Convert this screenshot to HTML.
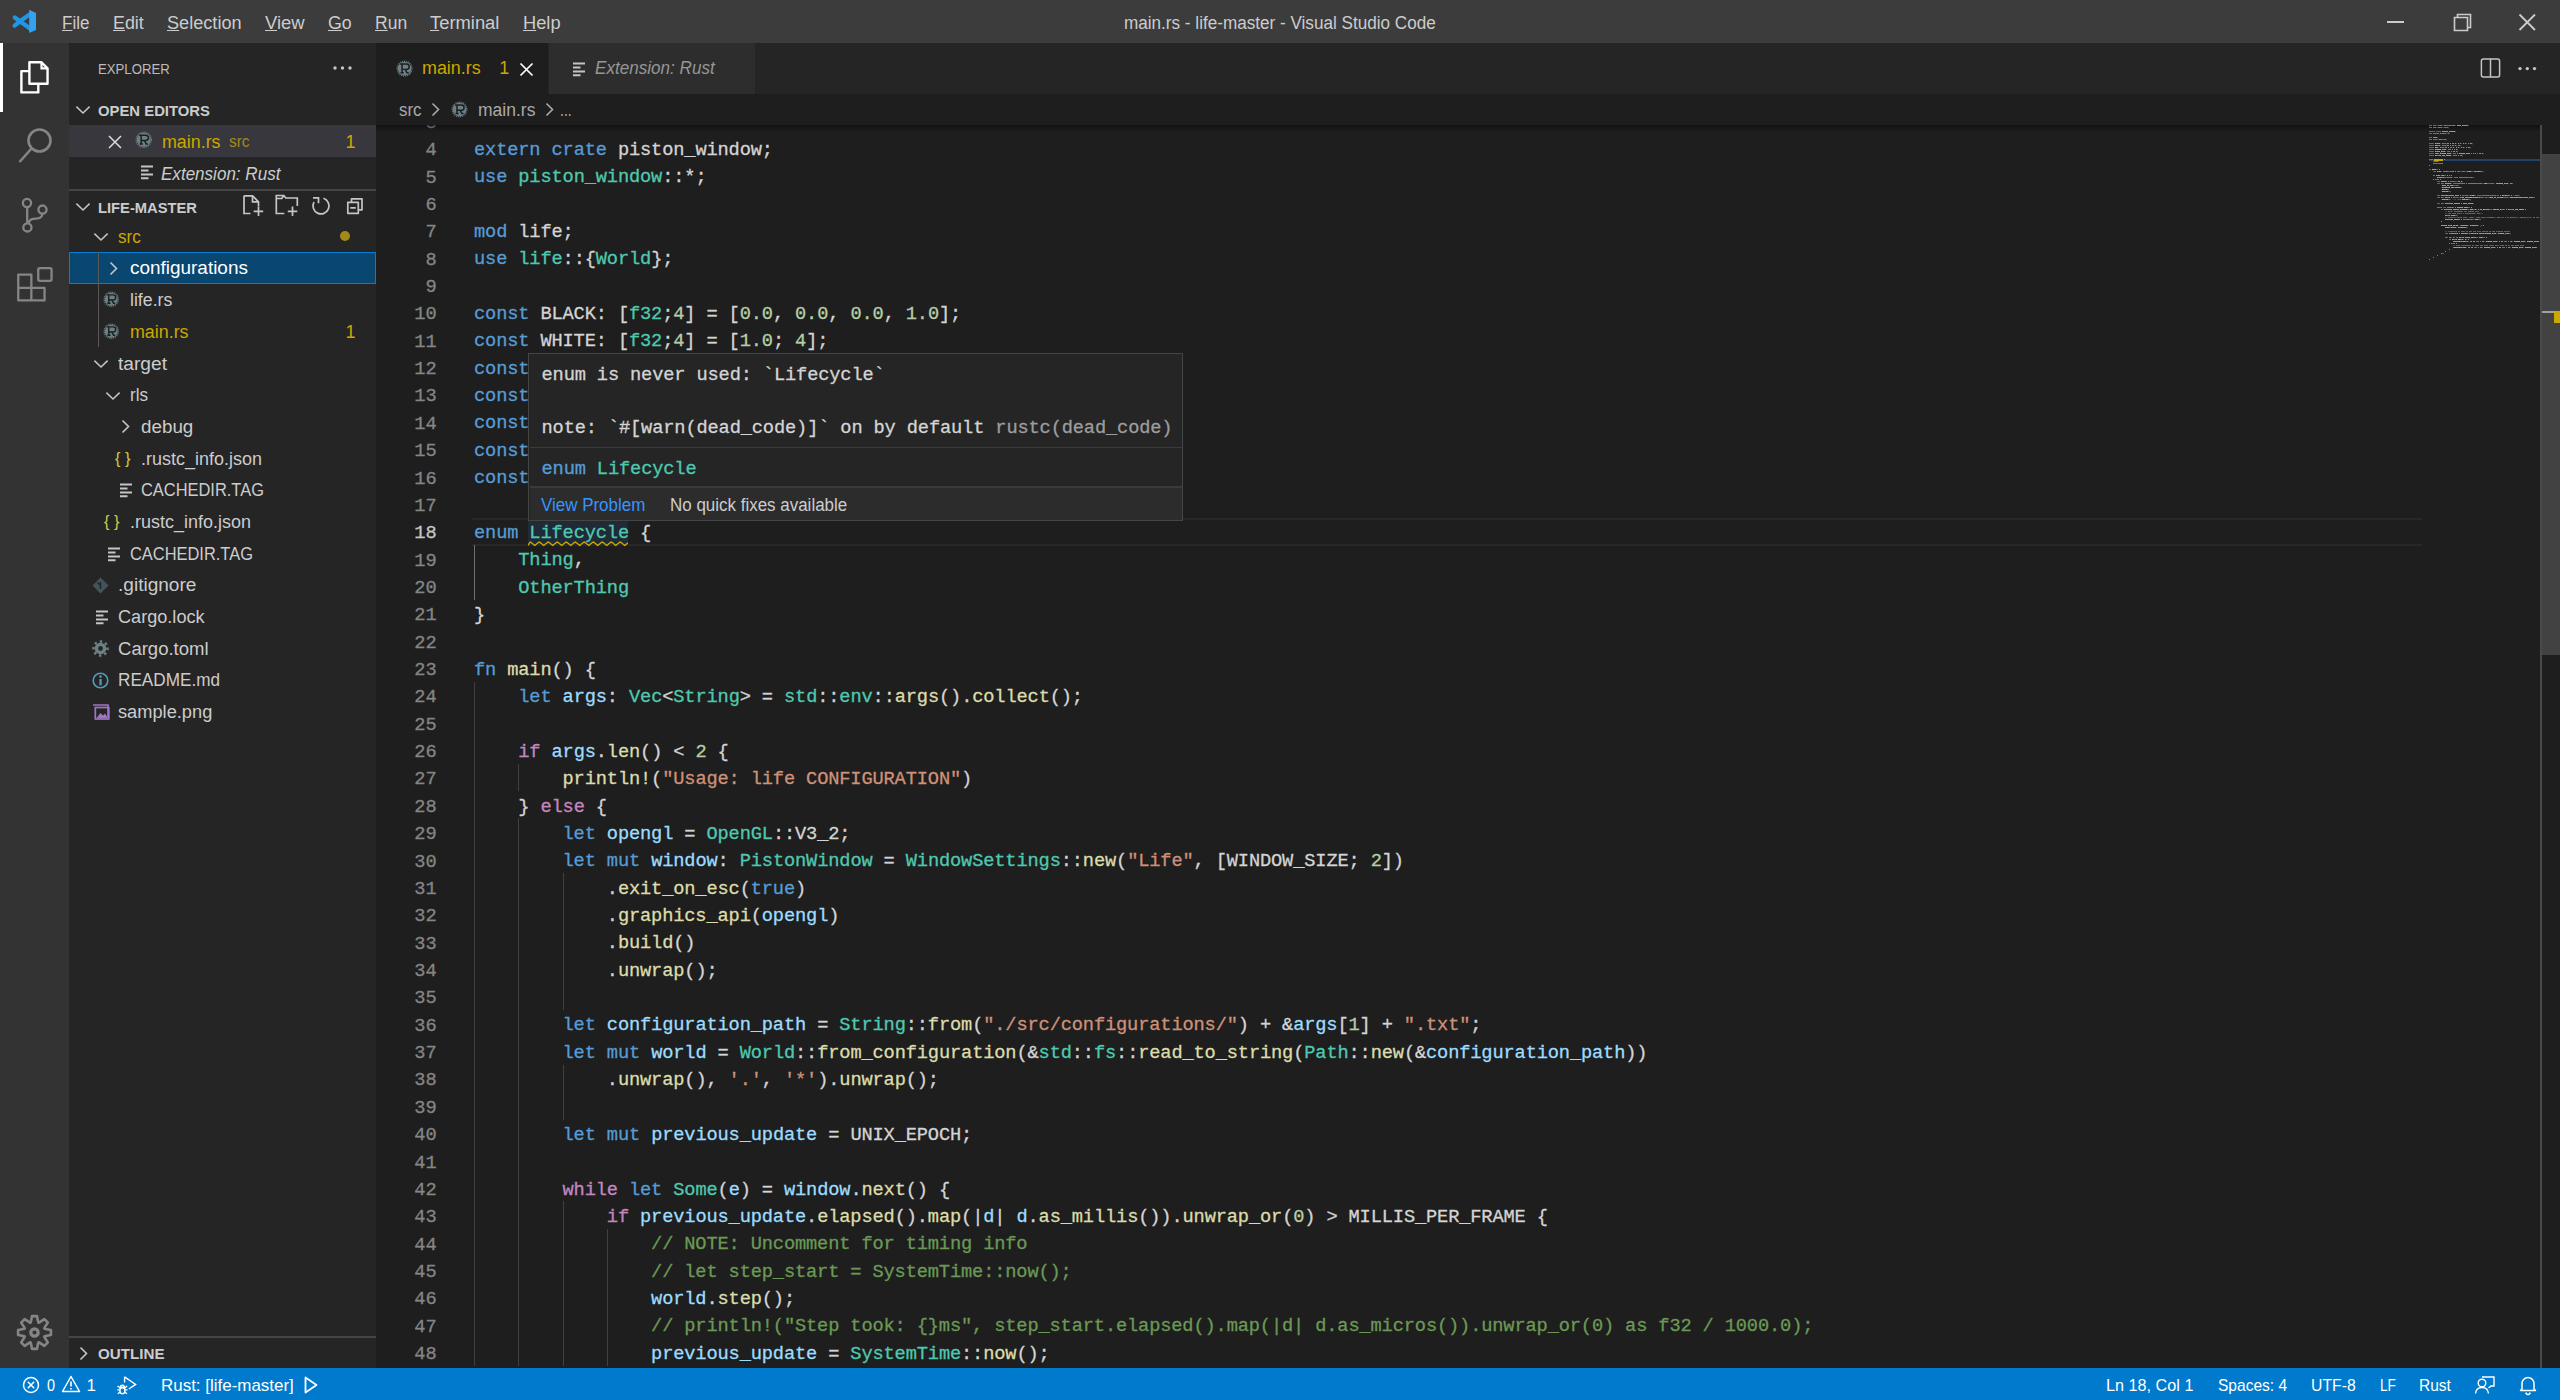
<!DOCTYPE html>
<html><head><meta charset="utf-8"><title>main.rs - life-master - Visual Studio Code</title>
<style>
html,body{margin:0;padding:0;}
body{width:2560px;height:1400px;overflow:hidden;position:relative;background:#1e1e1e;font-family:'Liberation Sans', sans-serif;}
.t{position:absolute;white-space:pre;}
.r{position:absolute;}
.s{position:absolute;overflow:visible;}
.code{position:absolute;white-space:pre;font-family:'Liberation Mono', monospace;}
</style></head><body>
<div class="r" style="left:0px;top:0px;width:2560px;height:43px;background:#3c3c3c;"></div><div class="r" style="left:0px;top:43px;width:69px;height:1325px;background:#333333;"></div><div class="r" style="left:69px;top:43px;width:307px;height:1325px;background:#252526;"></div><div class="r" style="left:376px;top:43px;width:2184px;height:51px;background:#252526;"></div><div class="r" style="left:376px;top:43px;width:172px;height:51px;background:#1e1e1e;"></div><div class="r" style="left:549px;top:43px;width:206px;height:51px;background:#2d2d2d;"></div><div class="r" style="left:0px;top:1368px;width:2560px;height:32px;background:#007acc;"></div><svg class="s" style="left:0px;top:0px;" width="45" height="43" viewBox="0 0 45 43"><path d="M14.8 17.4 L30 28.6 M14.6 25.6 L19.5 21.8 M30 14.2 L18.8 22" stroke="#2196e6" stroke-width="4.3" stroke-linecap="round"/><path d="M29.2 9.8 L36 12.9 V30 L29.2 33.1 Z" fill="#33a3ee"/></svg><div class="t" style="left:62.20px;top:14.06px;font-size:18px;line-height:18px;color:#cccccc;font-family:'Liberation Sans', sans-serif;transform:scaleX(0.9449);transform-origin:0 0;"><u style="text-decoration-thickness:1px;text-underline-offset:1px">F</u>ile</div><div class="t" style="left:113.00px;top:14.06px;font-size:18px;line-height:18px;color:#cccccc;font-family:'Liberation Sans', sans-serif;transform:scaleX(0.9931);transform-origin:0 0;"><u style="text-decoration-thickness:1px;text-underline-offset:1px">E</u>dit</div><div class="t" style="left:167.40px;top:14.06px;font-size:18px;line-height:18px;color:#cccccc;font-family:'Liberation Sans', sans-serif;transform:scaleX(1.0074);transform-origin:0 0;"><u style="text-decoration-thickness:1px;text-underline-offset:1px">S</u>election</div><div class="t" style="left:265.30px;top:14.06px;font-size:18px;line-height:18px;color:#cccccc;font-family:'Liberation Sans', sans-serif;transform:scaleX(1.0249);transform-origin:0 0;"><u style="text-decoration-thickness:1px;text-underline-offset:1px">V</u>iew</div><div class="t" style="left:327.90px;top:14.06px;font-size:18px;line-height:18px;color:#cccccc;font-family:'Liberation Sans', sans-serif;transform:scaleX(0.9870);transform-origin:0 0;"><u style="text-decoration-thickness:1px;text-underline-offset:1px">G</u>o</div><div class="t" style="left:375.00px;top:14.06px;font-size:18px;line-height:18px;color:#cccccc;font-family:'Liberation Sans', sans-serif;transform:scaleX(0.9724);transform-origin:0 0;"><u style="text-decoration-thickness:1px;text-underline-offset:1px">R</u>un</div><div class="t" style="left:429.90px;top:14.06px;font-size:18px;line-height:18px;color:#cccccc;font-family:'Liberation Sans', sans-serif;transform:scaleX(1.0203);transform-origin:0 0;"><u style="text-decoration-thickness:1px;text-underline-offset:1px">T</u>erminal</div><div class="t" style="left:523.30px;top:14.06px;font-size:18px;line-height:18px;color:#cccccc;font-family:'Liberation Sans', sans-serif;transform:scaleX(1.0155);transform-origin:0 0;"><u style="text-decoration-thickness:1px;text-underline-offset:1px">H</u>elp</div><div class="t" style="left:1124.30px;top:13.76px;font-size:18px;line-height:18px;color:#cccccc;font-family:'Liberation Sans', sans-serif;transform:scaleX(0.9509);transform-origin:0 0;">main.rs - life-master - Visual Studio Code</div><svg class="s" style="left:2380px;top:10px;" width="180" height="26" viewBox="0 0 180 26"><rect x="7" y="11" width="17" height="2" fill="#cccccc"/>
<path d="M74.5 7.5 h13 v13 h-13 z M77.5 7.5 v-3 h13 v13 h-3" fill="none" stroke="#cccccc" stroke-width="1.6"/>
<path d="M139.5 4.5 L155 20 M155 4.5 L139.5 20" stroke="#cccccc" stroke-width="1.8"/></svg><div class="r" style="left:0px;top:43px;width:3px;height:69px;background:#ffffff;"></div><svg class="s" style="left:16px;top:58px;" width="36" height="40" viewBox="0 0 36 40"><path d="M13.4 4.3 H25.5 L31.55 10.3 V25.8 H13.4 Z" fill="none" stroke="#fff" stroke-width="2.4" stroke-linejoin="round"/>
<path d="M25.5 4.3 V10.3 H31.55" fill="none" stroke="#fff" stroke-width="2.2"/>
<path d="M13.4 13.1 H5.4 V34.4 H22.3 V25.8" fill="none" stroke="#fff" stroke-width="2.4" stroke-linejoin="round"/></svg><svg class="s" style="left:16px;top:126px;" width="40" height="40" viewBox="0 0 40 40"><circle cx="23.5" cy="14.5" r="11" fill="none" stroke="#858585" stroke-width="2.6"/>
<path d="M15.5 22.5 L3.5 36" stroke="#858585" stroke-width="2.6"/></svg><svg class="s" style="left:16px;top:196px;" width="40" height="40" viewBox="0 0 40 40"><circle cx="11" cy="7" r="4.1" fill="none" stroke="#858585" stroke-width="2.3"/>
<circle cx="11.4" cy="31.4" r="4.1" fill="none" stroke="#858585" stroke-width="2.3"/>
<circle cx="26.5" cy="13.6" r="4.1" fill="none" stroke="#858585" stroke-width="2.3"/>
<path d="M11.2 11.1 V27.3 M12.4 27.4 C13.8 23.4 15.5 22.7 20 22.6 C24.2 22.5 26.2 21 26.4 17.7" fill="none" stroke="#858585" stroke-width="2.3"/></svg><svg class="s" style="left:14px;top:264px;" width="42" height="42" viewBox="0 0 42 42"><path d="M4.25 10.55 H17.35 V23.9 H30.55 V36.45 H4.25 Z M4.25 23.9 H17.35 V36.45" fill="none" stroke="#858585" stroke-width="2.3" stroke-linejoin="round"/>
<rect x="24.25" y="4.15" width="13.3" height="12.8" rx="1.6" fill="none" stroke="#858585" stroke-width="2.3"/></svg><svg class="s" style="left:17px;top:1315px;" width="36" height="36" viewBox="0 0 36 36"><path d="M13.96 6.45 L15.02 1.09 L19.98 1.09 L21.04 6.45 L21.56 7.71 L22.81 7.19 L27.35 4.14 L30.86 7.65 L27.81 12.19 L27.29 13.44 L28.55 13.96 L33.91 15.02 L33.91 19.98 L28.55 21.04 L27.29 21.56 L27.81 22.81 L30.86 27.35 L27.35 30.86 L22.81 27.81 L21.56 27.29 L21.04 28.55 L19.98 33.91 L15.02 33.91 L13.96 28.55 L13.44 27.29 L12.19 27.81 L7.65 30.86 L4.14 27.35 L7.19 22.81 L7.71 21.56 L6.45 21.04 L1.09 19.98 L1.09 15.02 L6.45 13.96 L7.71 13.44 L7.19 12.19 L4.14 7.65 L7.65 4.14 L12.19 7.19 L13.44 7.71Z" fill="none" stroke="#858585" stroke-width="2.6" stroke-linejoin="round"/><circle cx="17.5" cy="17.5" r="3.7" fill="none" stroke="#858585" stroke-width="3.2"/></svg><div class="t" style="left:98.25px;top:61.26px;font-size:15.4px;line-height:15.4px;color:#bbbbbb;font-family:'Liberation Sans', sans-serif;transform:scaleX(0.8555);transform-origin:0 0;">EXPLORER</div><svg class="s" style="left:332px;top:64px;" width="24" height="8" viewBox="0 0 24 8"><circle cx="3" cy="4" r="1.7" fill="#c5c5c5"/><circle cx="10.5" cy="4" r="1.7" fill="#c5c5c5"/><circle cx="18" cy="4" r="1.7" fill="#c5c5c5"/></svg><svg class="s" style="left:75px;top:103.8px;" width="16" height="12" viewBox="0 0 16 12"><path d="M1.4 2.6 L8 9 L14.6 2.6" fill="none" stroke="#c5c5c5" stroke-width="1.5"/></svg><div class="t" style="left:98.00px;top:103.10px;font-size:15px;line-height:15px;color:#cccccc;font-family:'Liberation Sans', sans-serif;font-weight:bold;transform:scaleX(0.9904);transform-origin:0 0;">OPEN EDITORS</div><div class="r" style="left:69px;top:125px;width:307px;height:32px;background:#37373d;"></div><svg class="s" style="left:107px;top:134px;" width="16" height="16" viewBox="0 0 16 16"><path d="M2 2 L14 14 M14 2 L2 14" stroke="#dcdcdc" stroke-width="1.5"/></svg><svg class="s" style="left:134.8px;top:131.3px;" width="17.5" height="17.5" viewBox="0 0 17.5 17.5"><circle cx="8.75" cy="8.75" r="6.95" fill="#6d8086"/><circle cx="8.75" cy="8.75" r="7.550000000000001" fill="none" stroke="#6d8086" stroke-width="1.3" stroke-dasharray="1.1 0.9"/><path d="M4.15 4.15 h6.2 a3 2.6 0 0 1 0 5.4 h-5 M6.15 4.15 v8.6 M4.55 12.95 h3.4 M9.55 9.65 l1.6 3.3 h1.8" fill="none" stroke="#1e1e1e" stroke-width="1.5" transform="scale(1.0) translate(0.00,0.00)"/></svg><div class="t" style="left:161.70px;top:132.66px;font-size:18px;line-height:18px;color:#cca700;font-family:'Liberation Sans', sans-serif;transform:scaleX(0.9915);transform-origin:0 0;">main.rs</div><div class="t" style="left:229.10px;top:134.36px;font-size:16px;line-height:16px;color:#a38a14;font-family:'Liberation Sans', sans-serif;transform:scaleX(0.9659);transform-origin:0 0;">src</div><div class="t" style="left:345.50px;top:132.66px;font-size:18px;line-height:18px;color:#cca700;font-family:'Liberation Sans', sans-serif;">1</div><svg class="s" style="left:140.5px;top:165px;" width="14" height="14" viewBox="0 0 14 14"><path d="M0 1.5 h12 M0 5.5 h7.5 M0 9.5 h12 M0 13.2 h7.5" stroke="#c5c5c5" stroke-width="1.9"/></svg><div class="t" style="left:161.25px;top:164.56px;font-size:18px;line-height:18px;color:#cccccc;font-family:'Liberation Sans', sans-serif;font-style:italic;transform:scaleX(0.9471);transform-origin:0 0;">Extension: Rust</div><div class="r" style="left:69px;top:189px;width:307px;height:1.5px;background:#454545;"></div><svg class="s" style="left:75px;top:200.8px;" width="16" height="12" viewBox="0 0 16 12"><path d="M1.4 2.6 L8 9 L14.6 2.6" fill="none" stroke="#c5c5c5" stroke-width="1.5"/></svg><div class="t" style="left:98.00px;top:199.50px;font-size:15px;line-height:15px;color:#cccccc;font-family:'Liberation Sans', sans-serif;font-weight:bold;transform:scaleX(0.9819);transform-origin:0 0;">LIFE-MASTER</div><svg class="s" style="left:240px;top:193px;" width="140" height="26" viewBox="0 0 140 26"><path d="M4 2.8 h8.5 l6 6 v4.5 M10.5 20.5 h-6.5 v-17.7" fill="none" stroke="#c5c5c5" stroke-width="1.7"/>
<path d="M12.5 2.8 v6 h6" fill="none" stroke="#c5c5c5" stroke-width="1.7"/>
<path d="M18.5 13.5 v9.5 M13.7 18.3 h9.5" stroke="#c5c5c5" stroke-width="1.7"/>
<g transform="translate(-10.5,0)"><path d="M46.8 13 v-10.5 h7.5 l2 2.5 h11.5 v8 M46.8 13 v7.5 h8 M54.3 2.5 l-2 3 h-5.5" fill="none" stroke="#c5c5c5" stroke-width="1.7"/>
<path d="M63 13.5 v9.5 M58.3 18.3 h9.5" stroke="#c5c5c5" stroke-width="1.7"/></g>
<g transform="translate(-4.5,0)"><path d="M78.5 9 A8 8 0 1 0 88 5.3" fill="none" stroke="#c5c5c5" stroke-width="1.7"/>
<path d="M77.5 4.8 h5.5 v5.5" fill="none" stroke="#c5c5c5" stroke-width="1.7"/></g>
<g transform="translate(-3.5,0)"><path d="M111.3 9.3 h10.5 v11 h-10.5 z M115 9.3 v-3.5 h10.5 v11 h-3.7 M113.8 14.8 h5.5" fill="none" stroke="#c5c5c5" stroke-width="1.7" stroke-linejoin="round"/></g></svg><div class="r" style="left:69px;top:252px;width:307px;height:32px;background:#094771;box-sizing:border-box;border:1px solid #007fd4;"></div><div class="r" style="left:98px;top:252px;width:1px;height:95px;background:#585858;"></div><svg class="s" style="left:93.0px;top:231.12px;" width="16" height="12" viewBox="0 0 16 12"><path d="M1.4 2.6 L8 9 L14.6 2.6" fill="none" stroke="#c5c5c5" stroke-width="1.5"/></svg><div class="t" style="left:118.00px;top:227.78px;font-size:18px;line-height:18px;color:#cca700;font-family:'Liberation Sans', sans-serif;transform:scaleX(0.9502);transform-origin:0 0;">src</div><svg class="s" style="left:108.02px;top:260.5px;" width="12" height="16" viewBox="0 0 12 16"><path d="M2.5 1.5 L8.5 7.5 L2.5 13.5" fill="none" stroke="#c5c5c5" stroke-width="1.6"/></svg><div class="t" style="left:129.52px;top:259.46px;font-size:18px;line-height:18px;color:#ffffff;font-family:'Liberation Sans', sans-serif;transform:scaleX(1.0520);transform-origin:0 0;">configurations</div><svg class="s" style="left:103.3px;top:291.18px;" width="16.5" height="16.5" viewBox="0 0 16.5 16.5"><circle cx="8.25" cy="8.25" r="6.45" fill="#6d8086"/><circle cx="8.25" cy="8.25" r="7.050000000000001" fill="none" stroke="#6d8086" stroke-width="1.3" stroke-dasharray="1.1 0.9"/><path d="M3.6500000000000004 3.6500000000000004 h6.2 a3 2.6 0 0 1 0 5.4 h-5 M5.65 3.6500000000000004 v8.6 M4.05 12.45 h3.4 M9.05 9.15 l1.6 3.3 h1.8" fill="none" stroke="#1e1e1e" stroke-width="1.5" transform="scale(0.9428571428571428) translate(0.50,0.50)"/></svg><div class="t" style="left:129.52px;top:291.14px;font-size:18px;line-height:18px;color:#cccccc;font-family:'Liberation Sans', sans-serif;transform:scaleX(0.9837);transform-origin:0 0;">life.rs</div><svg class="s" style="left:103.3px;top:322.86px;" width="16.5" height="16.5" viewBox="0 0 16.5 16.5"><circle cx="8.25" cy="8.25" r="6.45" fill="#6d8086"/><circle cx="8.25" cy="8.25" r="7.050000000000001" fill="none" stroke="#6d8086" stroke-width="1.3" stroke-dasharray="1.1 0.9"/><path d="M3.6500000000000004 3.6500000000000004 h6.2 a3 2.6 0 0 1 0 5.4 h-5 M5.65 3.6500000000000004 v8.6 M4.05 12.45 h3.4 M9.05 9.15 l1.6 3.3 h1.8" fill="none" stroke="#1e1e1e" stroke-width="1.5" transform="scale(0.9428571428571428) translate(0.50,0.50)"/></svg><div class="t" style="left:129.52px;top:322.82px;font-size:18px;line-height:18px;color:#cca700;font-family:'Liberation Sans', sans-serif;transform:scaleX(0.9915);transform-origin:0 0;">main.rs</div><svg class="s" style="left:93.0px;top:357.84px;" width="16" height="12" viewBox="0 0 16 12"><path d="M1.4 2.6 L8 9 L14.6 2.6" fill="none" stroke="#c5c5c5" stroke-width="1.5"/></svg><div class="t" style="left:118.00px;top:354.50px;font-size:18px;line-height:18px;color:#cccccc;font-family:'Liberation Sans', sans-serif;transform:scaleX(1.0646);transform-origin:0 0;">target</div><svg class="s" style="left:104.52px;top:389.52000000000004px;" width="16" height="12" viewBox="0 0 16 12"><path d="M1.4 2.6 L8 9 L14.6 2.6" fill="none" stroke="#c5c5c5" stroke-width="1.5"/></svg><div class="t" style="left:129.52px;top:386.18px;font-size:18px;line-height:18px;color:#cccccc;font-family:'Liberation Sans', sans-serif;transform:scaleX(0.9479);transform-origin:0 0;">rls</div><svg class="s" style="left:119.53999999999999px;top:418.9px;" width="12" height="16" viewBox="0 0 12 16"><path d="M2.5 1.5 L8.5 7.5 L2.5 13.5" fill="none" stroke="#c5c5c5" stroke-width="1.6"/></svg><div class="t" style="left:141.04px;top:417.86px;font-size:18px;line-height:18px;color:#cccccc;font-family:'Liberation Sans', sans-serif;transform:scaleX(1.0448);transform-origin:0 0;">debug</div><div class="t" style="left:115.02px;top:449.89px;font-size:17px;line-height:17px;color:#cbcb41;font-family:'Liberation Sans', sans-serif;transform:scaleX(0.9638);transform-origin:0 0;">{ }</div><div class="t" style="left:141.04px;top:449.54px;font-size:18px;line-height:18px;color:#cccccc;font-family:'Liberation Sans', sans-serif;transform:scaleX(0.9986);transform-origin:0 0;">.rustc_info.json</div><svg class="s" style="left:119.52px;top:483.26px;" width="14" height="14" viewBox="0 0 14 14"><path d="M0 1.5 h12 M0 5.5 h7.5 M0 9.5 h12 M0 13.2 h7.5" stroke="#c5c5c5" stroke-width="1.9"/></svg><div class="t" style="left:141.04px;top:481.22px;font-size:18px;line-height:18px;color:#cccccc;font-family:'Liberation Sans', sans-serif;transform:scaleX(0.9126);transform-origin:0 0;">CACHEDIR.TAG</div><div class="t" style="left:103.50px;top:513.25px;font-size:17px;line-height:17px;color:#cbcb41;font-family:'Liberation Sans', sans-serif;transform:scaleX(0.9638);transform-origin:0 0;">{ }</div><div class="t" style="left:129.52px;top:512.90px;font-size:18px;line-height:18px;color:#cccccc;font-family:'Liberation Sans', sans-serif;transform:scaleX(0.9986);transform-origin:0 0;">.rustc_info.json</div><svg class="s" style="left:108.0px;top:546.62px;" width="14" height="14" viewBox="0 0 14 14"><path d="M0 1.5 h12 M0 5.5 h7.5 M0 9.5 h12 M0 13.2 h7.5" stroke="#c5c5c5" stroke-width="1.9"/></svg><div class="t" style="left:129.52px;top:544.58px;font-size:18px;line-height:18px;color:#cccccc;font-family:'Liberation Sans', sans-serif;transform:scaleX(0.9126);transform-origin:0 0;">CACHEDIR.TAG</div><svg class="s" style="left:92px;top:576.8px;" width="17" height="17" viewBox="0 0 17 17"><path d="M8.5 0.5 L16.5 8.5 L8.5 16.5 L0.5 8.5 Z" fill="#41535b"/><path d="M5.5 5.5 L8.5 8.5 M8.5 5 V12" stroke="#252526" stroke-width="1.4"/></svg><div class="t" style="left:118.00px;top:576.26px;font-size:18px;line-height:18px;color:#cccccc;font-family:'Liberation Sans', sans-serif;transform:scaleX(1.0587);transform-origin:0 0;">.gitignore</div><svg class="s" style="left:96.48px;top:609.98px;" width="14" height="14" viewBox="0 0 14 14"><path d="M0 1.5 h12 M0 5.5 h7.5 M0 9.5 h12 M0 13.2 h7.5" stroke="#c5c5c5" stroke-width="1.9"/></svg><div class="t" style="left:118.00px;top:607.94px;font-size:18px;line-height:18px;color:#cccccc;font-family:'Liberation Sans', sans-serif;transform:scaleX(1.0061);transform-origin:0 0;">Cargo.lock</div><svg class="s" style="left:92px;top:639.66px;" width="17" height="17" viewBox="0 0 17 17"><circle cx="8.5" cy="8.5" r="7" fill="none" stroke="#6d8086" stroke-width="2.6" stroke-dasharray="2.4 3.1" transform="rotate(-8 8.5 8.5)"/><circle cx="8.5" cy="8.5" r="4.1" fill="none" stroke="#6d8086" stroke-width="3.4"/></svg><div class="t" style="left:118.00px;top:639.62px;font-size:18px;line-height:18px;color:#cccccc;font-family:'Liberation Sans', sans-serif;transform:scaleX(1.0291);transform-origin:0 0;">Cargo.toml</div><svg class="s" style="left:92px;top:671.8399999999999px;" width="17" height="17" viewBox="0 0 17 17"><circle cx="8.5" cy="8.5" r="7.3" fill="none" stroke="#519aba" stroke-width="1.6"/><rect x="7.4" y="7" width="2.3" height="6.3" fill="#519aba"/><circle cx="8.5" cy="4.6" r="1.3" fill="#519aba"/></svg><div class="t" style="left:118.00px;top:671.30px;font-size:18px;line-height:18px;color:#cccccc;font-family:'Liberation Sans', sans-serif;transform:scaleX(0.9532);transform-origin:0 0;">README.md</div><svg class="s" style="left:92px;top:703.52px;" width="18" height="16" viewBox="0 0 18 16"><path d="M1 1 h15 v12" fill="none" stroke="#a074c4" stroke-width="1.6"/><rect x="3.3" y="3.5" width="13.5" height="11.5" fill="none" stroke="#a074c4" stroke-width="1.7"/><path d="M4.5 14 L8.5 9 L11 11.5 L13 9.5 L16 14 Z" fill="#a074c4"/></svg><div class="t" style="left:118.00px;top:702.98px;font-size:18px;line-height:18px;color:#cccccc;font-family:'Liberation Sans', sans-serif;transform:scaleX(1.0133);transform-origin:0 0;">sample.png</div><svg class="s" style="left:339px;top:230px;" width="12" height="12" viewBox="0 0 12 12"><circle cx="6" cy="6" r="5" fill="#a38a14"/></svg><div class="t" style="left:345.50px;top:322.82px;font-size:18px;line-height:18px;color:#cca700;font-family:'Liberation Sans', sans-serif;">1</div><div class="r" style="left:69px;top:1336px;width:307px;height:1.5px;background:#454545;"></div><svg class="s" style="left:78px;top:1345.5px;" width="12" height="16" viewBox="0 0 12 16"><path d="M2.5 1.5 L8.5 7.5 L2.5 13.5" fill="none" stroke="#c5c5c5" stroke-width="1.6"/></svg><div class="t" style="left:98.00px;top:1346.10px;font-size:15px;line-height:15px;color:#cccccc;font-family:'Liberation Sans', sans-serif;font-weight:bold;transform:scaleX(1.0101);transform-origin:0 0;">OUTLINE</div><svg class="s" style="left:395.8px;top:59.5px;" width="17.2" height="17.2" viewBox="0 0 17.2 17.2"><circle cx="8.6" cy="8.6" r="6.8" fill="#6d8086"/><circle cx="8.6" cy="8.6" r="7.4" fill="none" stroke="#6d8086" stroke-width="1.3" stroke-dasharray="1.1 0.9"/><path d="M4.0 4.0 h6.2 a3 2.6 0 0 1 0 5.4 h-5 M6.0 4.0 v8.6 M4.3999999999999995 12.8 h3.4 M9.4 9.5 l1.6 3.3 h1.8" fill="none" stroke="#1e1e1e" stroke-width="1.5" transform="scale(0.9828571428571428) translate(0.15,0.15)"/></svg><div class="t" style="left:422.30px;top:59.16px;font-size:18px;line-height:18px;color:#cca700;font-family:'Liberation Sans', sans-serif;transform:scaleX(0.9948);transform-origin:0 0;">main.rs</div><div class="t" style="left:499.20px;top:59.16px;font-size:18px;line-height:18px;color:#cca700;font-family:'Liberation Sans', sans-serif;">1</div><svg class="s" style="left:519px;top:61.5px;" width="16" height="16" viewBox="0 0 16 16"><path d="M1.5 1.5 L13.5 13.5 M13.5 1.5 L1.5 13.5" stroke="#ffffff" stroke-width="1.7"/></svg><svg class="s" style="left:573px;top:62px;" width="14" height="14" viewBox="0 0 14 14"><path d="M0 1.5 h12 M0 5.5 h7.5 M0 9.5 h12 M0 13.2 h7.5" stroke="#c5c5c5" stroke-width="1.9"/></svg><div class="t" style="left:595.00px;top:59.16px;font-size:18px;line-height:18px;color:#969696;font-family:'Liberation Sans', sans-serif;font-style:italic;transform:scaleX(0.9495);transform-origin:0 0;">Extension: Rust</div><svg class="s" style="left:2478px;top:56px;" width="60" height="24" viewBox="0 0 60 24"><rect x="3.4" y="2.9" width="18.2" height="18" rx="2" fill="none" stroke="#c5c5c5" stroke-width="1.5"/><path d="M12.5 2.9 v18" stroke="#c5c5c5" stroke-width="1.5"/><circle cx="42" cy="12.6" r="1.7" fill="#c5c5c5"/><circle cx="49.3" cy="12.6" r="1.7" fill="#c5c5c5"/><circle cx="56.5" cy="12.6" r="1.7" fill="#c5c5c5"/></svg><div class="t" style="left:399.00px;top:101.16px;font-size:18px;line-height:18px;color:#a9a9a9;font-family:'Liberation Sans', sans-serif;transform:scaleX(0.9377);transform-origin:0 0;">src</div><svg class="s" style="left:429.5px;top:101.5px;" width="12" height="16" viewBox="0 0 12 16"><path d="M2.5 1.5 L8.5 7.5 L2.5 13.5" fill="none" stroke="#a9a9a9" stroke-width="1.6"/></svg><svg class="s" style="left:450.5px;top:101px;" width="17" height="17" viewBox="0 0 17 17"><circle cx="8.5" cy="8.5" r="6.7" fill="#6d8086"/><circle cx="8.5" cy="8.5" r="7.300000000000001" fill="none" stroke="#6d8086" stroke-width="1.3" stroke-dasharray="1.1 0.9"/><path d="M3.9000000000000004 3.9000000000000004 h6.2 a3 2.6 0 0 1 0 5.4 h-5 M5.9 3.9000000000000004 v8.6 M4.3 12.7 h3.4 M9.3 9.4 l1.6 3.3 h1.8" fill="none" stroke="#1e1e1e" stroke-width="1.5" transform="scale(0.9714285714285714) translate(0.25,0.25)"/></svg><div class="t" style="left:477.60px;top:101.16px;font-size:18px;line-height:18px;color:#a9a9a9;font-family:'Liberation Sans', sans-serif;transform:scaleX(0.9728);transform-origin:0 0;">main.rs</div><svg class="s" style="left:543.5px;top:101.5px;" width="12" height="16" viewBox="0 0 12 16"><path d="M2.5 1.5 L8.5 7.5 L2.5 13.5" fill="none" stroke="#a9a9a9" stroke-width="1.6"/></svg><div class="t" style="left:560.00px;top:101.16px;font-size:18px;line-height:18px;color:#a9a9a9;font-family:'Liberation Sans', sans-serif;transform:scaleX(0.7803);transform-origin:0 0;">...</div><div style="position:absolute;left:0;top:0;width:2560px;height:1400px;clip-path:inset(125.28px 20px 32px 376px)"><div class="r" style="left:472px;top:518.2px;width:1950px;height:27.6px;background:transparent;box-sizing:border-box;border-top:2px solid #282828;border-bottom:2px solid #282828;"></div><div class="r" style="left:474px;top:544.72px;width:1px;height:27.86px;background:#707070;"></div><div class="r" style="left:474px;top:572.0799999999999px;width:1px;height:27.86px;background:#707070;"></div><div class="r" style="left:474px;top:681.52px;width:1px;height:27.86px;background:#404040;"></div><div class="r" style="left:474px;top:708.8799999999999px;width:1px;height:27.86px;background:#404040;"></div><div class="r" style="left:474px;top:736.24px;width:1px;height:27.86px;background:#404040;"></div><div class="r" style="left:474px;top:763.5999999999999px;width:1px;height:27.86px;background:#404040;"></div><div class="r" style="left:518px;top:763.5999999999999px;width:1px;height:27.86px;background:#404040;"></div><div class="r" style="left:474px;top:790.96px;width:1px;height:27.86px;background:#404040;"></div><div class="r" style="left:474px;top:818.3199999999999px;width:1px;height:27.86px;background:#404040;"></div><div class="r" style="left:518px;top:818.3199999999999px;width:1px;height:27.86px;background:#404040;"></div><div class="r" style="left:474px;top:845.6800000000001px;width:1px;height:27.86px;background:#404040;"></div><div class="r" style="left:518px;top:845.6800000000001px;width:1px;height:27.86px;background:#404040;"></div><div class="r" style="left:474px;top:873.04px;width:1px;height:27.86px;background:#404040;"></div><div class="r" style="left:563px;top:873.04px;width:1px;height:27.86px;background:#404040;"></div><div class="r" style="left:518px;top:873.04px;width:1px;height:27.86px;background:#404040;"></div><div class="r" style="left:474px;top:900.3999999999999px;width:1px;height:27.86px;background:#404040;"></div><div class="r" style="left:563px;top:900.3999999999999px;width:1px;height:27.86px;background:#404040;"></div><div class="r" style="left:518px;top:900.3999999999999px;width:1px;height:27.86px;background:#404040;"></div><div class="r" style="left:474px;top:927.76px;width:1px;height:27.86px;background:#404040;"></div><div class="r" style="left:563px;top:927.76px;width:1px;height:27.86px;background:#404040;"></div><div class="r" style="left:518px;top:927.76px;width:1px;height:27.86px;background:#404040;"></div><div class="r" style="left:474px;top:955.1199999999999px;width:1px;height:27.86px;background:#404040;"></div><div class="r" style="left:563px;top:955.1199999999999px;width:1px;height:27.86px;background:#404040;"></div><div class="r" style="left:518px;top:955.1199999999999px;width:1px;height:27.86px;background:#404040;"></div><div class="r" style="left:474px;top:982.48px;width:1px;height:27.86px;background:#404040;"></div><div class="r" style="left:563px;top:982.48px;width:1px;height:27.86px;background:#404040;"></div><div class="r" style="left:518px;top:982.48px;width:1px;height:27.86px;background:#404040;"></div><div class="r" style="left:474px;top:1009.8399999999999px;width:1px;height:27.86px;background:#404040;"></div><div class="r" style="left:518px;top:1009.8399999999999px;width:1px;height:27.86px;background:#404040;"></div><div class="r" style="left:474px;top:1037.2px;width:1px;height:27.86px;background:#404040;"></div><div class="r" style="left:518px;top:1037.2px;width:1px;height:27.86px;background:#404040;"></div><div class="r" style="left:474px;top:1064.56px;width:1px;height:27.86px;background:#404040;"></div><div class="r" style="left:563px;top:1064.56px;width:1px;height:27.86px;background:#404040;"></div><div class="r" style="left:518px;top:1064.56px;width:1px;height:27.86px;background:#404040;"></div><div class="r" style="left:474px;top:1091.92px;width:1px;height:27.86px;background:#404040;"></div><div class="r" style="left:563px;top:1091.92px;width:1px;height:27.86px;background:#404040;"></div><div class="r" style="left:518px;top:1091.92px;width:1px;height:27.86px;background:#404040;"></div><div class="r" style="left:474px;top:1119.28px;width:1px;height:27.86px;background:#404040;"></div><div class="r" style="left:518px;top:1119.28px;width:1px;height:27.86px;background:#404040;"></div><div class="r" style="left:474px;top:1146.6399999999999px;width:1px;height:27.86px;background:#404040;"></div><div class="r" style="left:518px;top:1146.6399999999999px;width:1px;height:27.86px;background:#404040;"></div><div class="r" style="left:474px;top:1174.0px;width:1px;height:27.86px;background:#404040;"></div><div class="r" style="left:518px;top:1174.0px;width:1px;height:27.86px;background:#404040;"></div><div class="r" style="left:474px;top:1201.36px;width:1px;height:27.86px;background:#404040;"></div><div class="r" style="left:563px;top:1201.36px;width:1px;height:27.86px;background:#404040;"></div><div class="r" style="left:518px;top:1201.36px;width:1px;height:27.86px;background:#404040;"></div><div class="r" style="left:474px;top:1228.72px;width:1px;height:27.86px;background:#404040;"></div><div class="r" style="left:563px;top:1228.72px;width:1px;height:27.86px;background:#404040;"></div><div class="r" style="left:518px;top:1228.72px;width:1px;height:27.86px;background:#404040;"></div><div class="r" style="left:607px;top:1228.72px;width:1px;height:27.86px;background:#404040;"></div><div class="r" style="left:474px;top:1256.08px;width:1px;height:27.86px;background:#404040;"></div><div class="r" style="left:563px;top:1256.08px;width:1px;height:27.86px;background:#404040;"></div><div class="r" style="left:518px;top:1256.08px;width:1px;height:27.86px;background:#404040;"></div><div class="r" style="left:607px;top:1256.08px;width:1px;height:27.86px;background:#404040;"></div><div class="r" style="left:474px;top:1283.4399999999998px;width:1px;height:27.86px;background:#404040;"></div><div class="r" style="left:563px;top:1283.4399999999998px;width:1px;height:27.86px;background:#404040;"></div><div class="r" style="left:518px;top:1283.4399999999998px;width:1px;height:27.86px;background:#404040;"></div><div class="r" style="left:607px;top:1283.4399999999998px;width:1px;height:27.86px;background:#404040;"></div><div class="r" style="left:474px;top:1310.8px;width:1px;height:27.86px;background:#404040;"></div><div class="r" style="left:563px;top:1310.8px;width:1px;height:27.86px;background:#404040;"></div><div class="r" style="left:518px;top:1310.8px;width:1px;height:27.86px;background:#404040;"></div><div class="r" style="left:607px;top:1310.8px;width:1px;height:27.86px;background:#404040;"></div><div class="r" style="left:474px;top:1338.1599999999999px;width:1px;height:27.86px;background:#404040;"></div><div class="r" style="left:563px;top:1338.1599999999999px;width:1px;height:27.86px;background:#404040;"></div><div class="r" style="left:518px;top:1338.1599999999999px;width:1px;height:27.86px;background:#404040;"></div><div class="r" style="left:607px;top:1338.1599999999999px;width:1px;height:27.86px;background:#404040;"></div><div class="r" style="left:528px;top:519px;width:100px;height:27px;background:#202b36;"></div><div class="t" style="left:425.43px;top:113.83px;font-size:18.7px;line-height:18.7px;color:#858585;font-family:'Liberation Mono', monospace;letter-spacing:-0.14599999999999902px;-webkit-text-stroke:0.3px;">3</div><div class="t" style="left:425.43px;top:141.19px;font-size:18.7px;line-height:18.7px;color:#858585;font-family:'Liberation Mono', monospace;letter-spacing:-0.14599999999999902px;-webkit-text-stroke:0.3px;">4</div><div class="t" style="left:425.43px;top:168.55px;font-size:18.7px;line-height:18.7px;color:#858585;font-family:'Liberation Mono', monospace;letter-spacing:-0.14599999999999902px;-webkit-text-stroke:0.3px;">5</div><div class="t" style="left:425.43px;top:195.91px;font-size:18.7px;line-height:18.7px;color:#858585;font-family:'Liberation Mono', monospace;letter-spacing:-0.14599999999999902px;-webkit-text-stroke:0.3px;">6</div><div class="t" style="left:425.43px;top:223.27px;font-size:18.7px;line-height:18.7px;color:#858585;font-family:'Liberation Mono', monospace;letter-spacing:-0.14599999999999902px;-webkit-text-stroke:0.3px;">7</div><div class="t" style="left:425.43px;top:250.63px;font-size:18.7px;line-height:18.7px;color:#858585;font-family:'Liberation Mono', monospace;letter-spacing:-0.14599999999999902px;-webkit-text-stroke:0.3px;">8</div><div class="t" style="left:425.43px;top:277.99px;font-size:18.7px;line-height:18.7px;color:#858585;font-family:'Liberation Mono', monospace;letter-spacing:-0.14599999999999902px;-webkit-text-stroke:0.3px;">9</div><div class="t" style="left:414.35px;top:305.35px;font-size:18.7px;line-height:18.7px;color:#858585;font-family:'Liberation Mono', monospace;letter-spacing:-0.14599999999999902px;-webkit-text-stroke:0.3px;">10</div><div class="t" style="left:414.35px;top:332.71px;font-size:18.7px;line-height:18.7px;color:#858585;font-family:'Liberation Mono', monospace;letter-spacing:-0.14599999999999902px;-webkit-text-stroke:0.3px;">11</div><div class="t" style="left:414.35px;top:360.07px;font-size:18.7px;line-height:18.7px;color:#858585;font-family:'Liberation Mono', monospace;letter-spacing:-0.14599999999999902px;-webkit-text-stroke:0.3px;">12</div><div class="t" style="left:414.35px;top:387.43px;font-size:18.7px;line-height:18.7px;color:#858585;font-family:'Liberation Mono', monospace;letter-spacing:-0.14599999999999902px;-webkit-text-stroke:0.3px;">13</div><div class="t" style="left:414.35px;top:414.79px;font-size:18.7px;line-height:18.7px;color:#858585;font-family:'Liberation Mono', monospace;letter-spacing:-0.14599999999999902px;-webkit-text-stroke:0.3px;">14</div><div class="t" style="left:414.35px;top:442.15px;font-size:18.7px;line-height:18.7px;color:#858585;font-family:'Liberation Mono', monospace;letter-spacing:-0.14599999999999902px;-webkit-text-stroke:0.3px;">15</div><div class="t" style="left:414.35px;top:469.51px;font-size:18.7px;line-height:18.7px;color:#858585;font-family:'Liberation Mono', monospace;letter-spacing:-0.14599999999999902px;-webkit-text-stroke:0.3px;">16</div><div class="t" style="left:414.35px;top:496.87px;font-size:18.7px;line-height:18.7px;color:#858585;font-family:'Liberation Mono', monospace;letter-spacing:-0.14599999999999902px;-webkit-text-stroke:0.3px;">17</div><div class="t" style="left:414.35px;top:524.23px;font-size:18.7px;line-height:18.7px;color:#c6c6c6;font-family:'Liberation Mono', monospace;letter-spacing:-0.14599999999999902px;-webkit-text-stroke:0.3px;">18</div><div class="t" style="left:414.35px;top:551.59px;font-size:18.7px;line-height:18.7px;color:#858585;font-family:'Liberation Mono', monospace;letter-spacing:-0.14599999999999902px;-webkit-text-stroke:0.3px;">19</div><div class="t" style="left:414.35px;top:578.95px;font-size:18.7px;line-height:18.7px;color:#858585;font-family:'Liberation Mono', monospace;letter-spacing:-0.14599999999999902px;-webkit-text-stroke:0.3px;">20</div><div class="t" style="left:414.35px;top:606.31px;font-size:18.7px;line-height:18.7px;color:#858585;font-family:'Liberation Mono', monospace;letter-spacing:-0.14599999999999902px;-webkit-text-stroke:0.3px;">21</div><div class="t" style="left:414.35px;top:633.67px;font-size:18.7px;line-height:18.7px;color:#858585;font-family:'Liberation Mono', monospace;letter-spacing:-0.14599999999999902px;-webkit-text-stroke:0.3px;">22</div><div class="t" style="left:414.35px;top:661.03px;font-size:18.7px;line-height:18.7px;color:#858585;font-family:'Liberation Mono', monospace;letter-spacing:-0.14599999999999902px;-webkit-text-stroke:0.3px;">23</div><div class="t" style="left:414.35px;top:688.39px;font-size:18.7px;line-height:18.7px;color:#858585;font-family:'Liberation Mono', monospace;letter-spacing:-0.14599999999999902px;-webkit-text-stroke:0.3px;">24</div><div class="t" style="left:414.35px;top:715.75px;font-size:18.7px;line-height:18.7px;color:#858585;font-family:'Liberation Mono', monospace;letter-spacing:-0.14599999999999902px;-webkit-text-stroke:0.3px;">25</div><div class="t" style="left:414.35px;top:743.11px;font-size:18.7px;line-height:18.7px;color:#858585;font-family:'Liberation Mono', monospace;letter-spacing:-0.14599999999999902px;-webkit-text-stroke:0.3px;">26</div><div class="t" style="left:414.35px;top:770.47px;font-size:18.7px;line-height:18.7px;color:#858585;font-family:'Liberation Mono', monospace;letter-spacing:-0.14599999999999902px;-webkit-text-stroke:0.3px;">27</div><div class="t" style="left:414.35px;top:797.83px;font-size:18.7px;line-height:18.7px;color:#858585;font-family:'Liberation Mono', monospace;letter-spacing:-0.14599999999999902px;-webkit-text-stroke:0.3px;">28</div><div class="t" style="left:414.35px;top:825.19px;font-size:18.7px;line-height:18.7px;color:#858585;font-family:'Liberation Mono', monospace;letter-spacing:-0.14599999999999902px;-webkit-text-stroke:0.3px;">29</div><div class="t" style="left:414.35px;top:852.55px;font-size:18.7px;line-height:18.7px;color:#858585;font-family:'Liberation Mono', monospace;letter-spacing:-0.14599999999999902px;-webkit-text-stroke:0.3px;">30</div><div class="t" style="left:414.35px;top:879.91px;font-size:18.7px;line-height:18.7px;color:#858585;font-family:'Liberation Mono', monospace;letter-spacing:-0.14599999999999902px;-webkit-text-stroke:0.3px;">31</div><div class="t" style="left:414.35px;top:907.27px;font-size:18.7px;line-height:18.7px;color:#858585;font-family:'Liberation Mono', monospace;letter-spacing:-0.14599999999999902px;-webkit-text-stroke:0.3px;">32</div><div class="t" style="left:414.35px;top:934.63px;font-size:18.7px;line-height:18.7px;color:#858585;font-family:'Liberation Mono', monospace;letter-spacing:-0.14599999999999902px;-webkit-text-stroke:0.3px;">33</div><div class="t" style="left:414.35px;top:961.99px;font-size:18.7px;line-height:18.7px;color:#858585;font-family:'Liberation Mono', monospace;letter-spacing:-0.14599999999999902px;-webkit-text-stroke:0.3px;">34</div><div class="t" style="left:414.35px;top:989.35px;font-size:18.7px;line-height:18.7px;color:#858585;font-family:'Liberation Mono', monospace;letter-spacing:-0.14599999999999902px;-webkit-text-stroke:0.3px;">35</div><div class="t" style="left:414.35px;top:1016.71px;font-size:18.7px;line-height:18.7px;color:#858585;font-family:'Liberation Mono', monospace;letter-spacing:-0.14599999999999902px;-webkit-text-stroke:0.3px;">36</div><div class="t" style="left:414.35px;top:1044.07px;font-size:18.7px;line-height:18.7px;color:#858585;font-family:'Liberation Mono', monospace;letter-spacing:-0.14599999999999902px;-webkit-text-stroke:0.3px;">37</div><div class="t" style="left:414.35px;top:1071.43px;font-size:18.7px;line-height:18.7px;color:#858585;font-family:'Liberation Mono', monospace;letter-spacing:-0.14599999999999902px;-webkit-text-stroke:0.3px;">38</div><div class="t" style="left:414.35px;top:1098.79px;font-size:18.7px;line-height:18.7px;color:#858585;font-family:'Liberation Mono', monospace;letter-spacing:-0.14599999999999902px;-webkit-text-stroke:0.3px;">39</div><div class="t" style="left:414.35px;top:1126.15px;font-size:18.7px;line-height:18.7px;color:#858585;font-family:'Liberation Mono', monospace;letter-spacing:-0.14599999999999902px;-webkit-text-stroke:0.3px;">40</div><div class="t" style="left:414.35px;top:1153.51px;font-size:18.7px;line-height:18.7px;color:#858585;font-family:'Liberation Mono', monospace;letter-spacing:-0.14599999999999902px;-webkit-text-stroke:0.3px;">41</div><div class="t" style="left:414.35px;top:1180.87px;font-size:18.7px;line-height:18.7px;color:#858585;font-family:'Liberation Mono', monospace;letter-spacing:-0.14599999999999902px;-webkit-text-stroke:0.3px;">42</div><div class="t" style="left:414.35px;top:1208.23px;font-size:18.7px;line-height:18.7px;color:#858585;font-family:'Liberation Mono', monospace;letter-spacing:-0.14599999999999902px;-webkit-text-stroke:0.3px;">43</div><div class="t" style="left:414.35px;top:1235.59px;font-size:18.7px;line-height:18.7px;color:#858585;font-family:'Liberation Mono', monospace;letter-spacing:-0.14599999999999902px;-webkit-text-stroke:0.3px;">44</div><div class="t" style="left:414.35px;top:1262.95px;font-size:18.7px;line-height:18.7px;color:#858585;font-family:'Liberation Mono', monospace;letter-spacing:-0.14599999999999902px;-webkit-text-stroke:0.3px;">45</div><div class="t" style="left:414.35px;top:1290.31px;font-size:18.7px;line-height:18.7px;color:#858585;font-family:'Liberation Mono', monospace;letter-spacing:-0.14599999999999902px;-webkit-text-stroke:0.3px;">46</div><div class="t" style="left:414.35px;top:1317.67px;font-size:18.7px;line-height:18.7px;color:#858585;font-family:'Liberation Mono', monospace;letter-spacing:-0.14599999999999902px;-webkit-text-stroke:0.3px;">47</div><div class="t" style="left:414.35px;top:1345.03px;font-size:18.7px;line-height:18.7px;color:#858585;font-family:'Liberation Mono', monospace;letter-spacing:-0.14599999999999902px;-webkit-text-stroke:0.3px;">48</div><div class="t" style="left:474.00px;top:140.89px;font-size:18.7px;line-height:18.7px;color:#d4d4d4;font-family:'Liberation Mono', monospace;letter-spacing:-0.14599999999999902px;-webkit-text-stroke:0.3px;"><span style="color:#569cd6">extern</span><span style="color:#d4d4d4"> </span><span style="color:#569cd6">crate</span><span style="color:#d4d4d4"> piston_window;</span></div><div class="t" style="left:474.00px;top:168.25px;font-size:18.7px;line-height:18.7px;color:#d4d4d4;font-family:'Liberation Mono', monospace;letter-spacing:-0.14599999999999902px;-webkit-text-stroke:0.3px;"><span style="color:#569cd6">use</span><span style="color:#d4d4d4"> </span><span style="color:#4ec9b0">piston_window</span><span style="color:#d4d4d4">::*;</span></div><div class="t" style="left:474.00px;top:222.97px;font-size:18.7px;line-height:18.7px;color:#d4d4d4;font-family:'Liberation Mono', monospace;letter-spacing:-0.14599999999999902px;-webkit-text-stroke:0.3px;"><span style="color:#569cd6">mod</span><span style="color:#d4d4d4"> life;</span></div><div class="t" style="left:474.00px;top:250.33px;font-size:18.7px;line-height:18.7px;color:#d4d4d4;font-family:'Liberation Mono', monospace;letter-spacing:-0.14599999999999902px;-webkit-text-stroke:0.3px;"><span style="color:#569cd6">use</span><span style="color:#d4d4d4"> </span><span style="color:#4ec9b0">life</span><span style="color:#d4d4d4">::{</span><span style="color:#4ec9b0">World</span><span style="color:#d4d4d4">};</span></div><div class="t" style="left:474.00px;top:305.05px;font-size:18.7px;line-height:18.7px;color:#d4d4d4;font-family:'Liberation Mono', monospace;letter-spacing:-0.14599999999999902px;-webkit-text-stroke:0.3px;"><span style="color:#569cd6">const</span><span style="color:#d4d4d4"> BLACK: [</span><span style="color:#4ec9b0">f32</span><span style="color:#d4d4d4">;</span><span style="color:#b5cea8">4</span><span style="color:#d4d4d4">] = [</span><span style="color:#b5cea8">0.0</span><span style="color:#d4d4d4">, </span><span style="color:#b5cea8">0.0</span><span style="color:#d4d4d4">, </span><span style="color:#b5cea8">0.0</span><span style="color:#d4d4d4">, </span><span style="color:#b5cea8">1.0</span><span style="color:#d4d4d4">];</span></div><div class="t" style="left:474.00px;top:332.41px;font-size:18.7px;line-height:18.7px;color:#d4d4d4;font-family:'Liberation Mono', monospace;letter-spacing:-0.14599999999999902px;-webkit-text-stroke:0.3px;"><span style="color:#569cd6">const</span><span style="color:#d4d4d4"> WHITE: [</span><span style="color:#4ec9b0">f32</span><span style="color:#d4d4d4">;</span><span style="color:#b5cea8">4</span><span style="color:#d4d4d4">] = [</span><span style="color:#b5cea8">1.0</span><span style="color:#d4d4d4">; </span><span style="color:#b5cea8">4</span><span style="color:#d4d4d4">];</span></div><div class="t" style="left:474.00px;top:359.77px;font-size:18.7px;line-height:18.7px;color:#d4d4d4;font-family:'Liberation Mono', monospace;letter-spacing:-0.14599999999999902px;-webkit-text-stroke:0.3px;"><span style="color:#569cd6">const</span></div><div class="t" style="left:474.00px;top:387.13px;font-size:18.7px;line-height:18.7px;color:#d4d4d4;font-family:'Liberation Mono', monospace;letter-spacing:-0.14599999999999902px;-webkit-text-stroke:0.3px;"><span style="color:#569cd6">const</span></div><div class="t" style="left:474.00px;top:414.49px;font-size:18.7px;line-height:18.7px;color:#d4d4d4;font-family:'Liberation Mono', monospace;letter-spacing:-0.14599999999999902px;-webkit-text-stroke:0.3px;"><span style="color:#569cd6">const</span></div><div class="t" style="left:474.00px;top:441.85px;font-size:18.7px;line-height:18.7px;color:#d4d4d4;font-family:'Liberation Mono', monospace;letter-spacing:-0.14599999999999902px;-webkit-text-stroke:0.3px;"><span style="color:#569cd6">const</span></div><div class="t" style="left:474.00px;top:469.21px;font-size:18.7px;line-height:18.7px;color:#d4d4d4;font-family:'Liberation Mono', monospace;letter-spacing:-0.14599999999999902px;-webkit-text-stroke:0.3px;"><span style="color:#569cd6">const</span></div><div class="t" style="left:474.00px;top:523.93px;font-size:18.7px;line-height:18.7px;color:#d4d4d4;font-family:'Liberation Mono', monospace;letter-spacing:-0.14599999999999902px;-webkit-text-stroke:0.3px;"><span style="color:#569cd6">enum</span><span style="color:#d4d4d4"> </span><span style="color:#4ec9b0">Lifecycle</span><span style="color:#d4d4d4"> {</span></div><div class="t" style="left:474.00px;top:551.29px;font-size:18.7px;line-height:18.7px;color:#d4d4d4;font-family:'Liberation Mono', monospace;letter-spacing:-0.14599999999999902px;-webkit-text-stroke:0.3px;"><span style="color:#d4d4d4">    </span><span style="color:#4ec9b0">Thing</span><span style="color:#d4d4d4">,</span></div><div class="t" style="left:474.00px;top:578.65px;font-size:18.7px;line-height:18.7px;color:#d4d4d4;font-family:'Liberation Mono', monospace;letter-spacing:-0.14599999999999902px;-webkit-text-stroke:0.3px;"><span style="color:#d4d4d4">    </span><span style="color:#4ec9b0">OtherThing</span></div><div class="t" style="left:474.00px;top:606.01px;font-size:18.7px;line-height:18.7px;color:#d4d4d4;font-family:'Liberation Mono', monospace;letter-spacing:-0.14599999999999902px;-webkit-text-stroke:0.3px;"><span style="color:#d4d4d4">}</span></div><div class="t" style="left:474.00px;top:660.73px;font-size:18.7px;line-height:18.7px;color:#d4d4d4;font-family:'Liberation Mono', monospace;letter-spacing:-0.14599999999999902px;-webkit-text-stroke:0.3px;"><span style="color:#569cd6">fn</span><span style="color:#d4d4d4"> </span><span style="color:#dcdcaa">main</span><span style="color:#d4d4d4">() {</span></div><div class="t" style="left:474.00px;top:688.09px;font-size:18.7px;line-height:18.7px;color:#d4d4d4;font-family:'Liberation Mono', monospace;letter-spacing:-0.14599999999999902px;-webkit-text-stroke:0.3px;"><span style="color:#d4d4d4">    </span><span style="color:#569cd6">let</span><span style="color:#d4d4d4"> </span><span style="color:#9cdcfe">args</span><span style="color:#d4d4d4">: </span><span style="color:#4ec9b0">Vec</span><span style="color:#d4d4d4">&lt;</span><span style="color:#4ec9b0">String</span><span style="color:#d4d4d4">&gt; = </span><span style="color:#4ec9b0">std</span><span style="color:#d4d4d4">::</span><span style="color:#4ec9b0">env</span><span style="color:#d4d4d4">::</span><span style="color:#dcdcaa">args</span><span style="color:#d4d4d4">().</span><span style="color:#dcdcaa">collect</span><span style="color:#d4d4d4">();</span></div><div class="t" style="left:474.00px;top:742.81px;font-size:18.7px;line-height:18.7px;color:#d4d4d4;font-family:'Liberation Mono', monospace;letter-spacing:-0.14599999999999902px;-webkit-text-stroke:0.3px;"><span style="color:#d4d4d4">    </span><span style="color:#c586c0">if</span><span style="color:#d4d4d4"> </span><span style="color:#9cdcfe">args</span><span style="color:#d4d4d4">.</span><span style="color:#dcdcaa">len</span><span style="color:#d4d4d4">() &lt; </span><span style="color:#b5cea8">2</span><span style="color:#d4d4d4"> {</span></div><div class="t" style="left:474.00px;top:770.17px;font-size:18.7px;line-height:18.7px;color:#d4d4d4;font-family:'Liberation Mono', monospace;letter-spacing:-0.14599999999999902px;-webkit-text-stroke:0.3px;"><span style="color:#d4d4d4">        </span><span style="color:#dcdcaa">println!</span><span style="color:#d4d4d4">(</span><span style="color:#ce9178">"Usage: life CONFIGURATION"</span><span style="color:#d4d4d4">)</span></div><div class="t" style="left:474.00px;top:797.53px;font-size:18.7px;line-height:18.7px;color:#d4d4d4;font-family:'Liberation Mono', monospace;letter-spacing:-0.14599999999999902px;-webkit-text-stroke:0.3px;"><span style="color:#d4d4d4">    } </span><span style="color:#c586c0">else</span><span style="color:#d4d4d4"> {</span></div><div class="t" style="left:474.00px;top:824.89px;font-size:18.7px;line-height:18.7px;color:#d4d4d4;font-family:'Liberation Mono', monospace;letter-spacing:-0.14599999999999902px;-webkit-text-stroke:0.3px;"><span style="color:#d4d4d4">        </span><span style="color:#569cd6">let</span><span style="color:#d4d4d4"> </span><span style="color:#9cdcfe">opengl</span><span style="color:#d4d4d4"> = </span><span style="color:#4ec9b0">OpenGL</span><span style="color:#d4d4d4">::V3_2;</span></div><div class="t" style="left:474.00px;top:852.25px;font-size:18.7px;line-height:18.7px;color:#d4d4d4;font-family:'Liberation Mono', monospace;letter-spacing:-0.14599999999999902px;-webkit-text-stroke:0.3px;"><span style="color:#d4d4d4">        </span><span style="color:#569cd6">let</span><span style="color:#d4d4d4"> </span><span style="color:#569cd6">mut</span><span style="color:#d4d4d4"> </span><span style="color:#9cdcfe">window</span><span style="color:#d4d4d4">: </span><span style="color:#4ec9b0">PistonWindow</span><span style="color:#d4d4d4"> = </span><span style="color:#4ec9b0">WindowSettings</span><span style="color:#d4d4d4">::</span><span style="color:#dcdcaa">new</span><span style="color:#d4d4d4">(</span><span style="color:#ce9178">"Life"</span><span style="color:#d4d4d4">, [WINDOW_SIZE; </span><span style="color:#b5cea8">2</span><span style="color:#d4d4d4">])</span></div><div class="t" style="left:474.00px;top:879.61px;font-size:18.7px;line-height:18.7px;color:#d4d4d4;font-family:'Liberation Mono', monospace;letter-spacing:-0.14599999999999902px;-webkit-text-stroke:0.3px;"><span style="color:#d4d4d4">            .</span><span style="color:#dcdcaa">exit_on_esc</span><span style="color:#d4d4d4">(</span><span style="color:#569cd6">true</span><span style="color:#d4d4d4">)</span></div><div class="t" style="left:474.00px;top:906.97px;font-size:18.7px;line-height:18.7px;color:#d4d4d4;font-family:'Liberation Mono', monospace;letter-spacing:-0.14599999999999902px;-webkit-text-stroke:0.3px;"><span style="color:#d4d4d4">            .</span><span style="color:#dcdcaa">graphics_api</span><span style="color:#d4d4d4">(</span><span style="color:#9cdcfe">opengl</span><span style="color:#d4d4d4">)</span></div><div class="t" style="left:474.00px;top:934.33px;font-size:18.7px;line-height:18.7px;color:#d4d4d4;font-family:'Liberation Mono', monospace;letter-spacing:-0.14599999999999902px;-webkit-text-stroke:0.3px;"><span style="color:#d4d4d4">            .</span><span style="color:#dcdcaa">build</span><span style="color:#d4d4d4">()</span></div><div class="t" style="left:474.00px;top:961.69px;font-size:18.7px;line-height:18.7px;color:#d4d4d4;font-family:'Liberation Mono', monospace;letter-spacing:-0.14599999999999902px;-webkit-text-stroke:0.3px;"><span style="color:#d4d4d4">            .</span><span style="color:#dcdcaa">unwrap</span><span style="color:#d4d4d4">();</span></div><div class="t" style="left:474.00px;top:1016.41px;font-size:18.7px;line-height:18.7px;color:#d4d4d4;font-family:'Liberation Mono', monospace;letter-spacing:-0.14599999999999902px;-webkit-text-stroke:0.3px;"><span style="color:#d4d4d4">        </span><span style="color:#569cd6">let</span><span style="color:#d4d4d4"> </span><span style="color:#9cdcfe">configuration_path</span><span style="color:#d4d4d4"> = </span><span style="color:#4ec9b0">String</span><span style="color:#d4d4d4">::</span><span style="color:#dcdcaa">from</span><span style="color:#d4d4d4">(</span><span style="color:#ce9178">"./src/configurations/"</span><span style="color:#d4d4d4">) + &amp;</span><span style="color:#9cdcfe">args</span><span style="color:#d4d4d4">[</span><span style="color:#b5cea8">1</span><span style="color:#d4d4d4">] + </span><span style="color:#ce9178">".txt"</span><span style="color:#d4d4d4">;</span></div><div class="t" style="left:474.00px;top:1043.77px;font-size:18.7px;line-height:18.7px;color:#d4d4d4;font-family:'Liberation Mono', monospace;letter-spacing:-0.14599999999999902px;-webkit-text-stroke:0.3px;"><span style="color:#d4d4d4">        </span><span style="color:#569cd6">let</span><span style="color:#d4d4d4"> </span><span style="color:#569cd6">mut</span><span style="color:#d4d4d4"> </span><span style="color:#9cdcfe">world</span><span style="color:#d4d4d4"> = </span><span style="color:#4ec9b0">World</span><span style="color:#d4d4d4">::</span><span style="color:#dcdcaa">from_configuration</span><span style="color:#d4d4d4">(&amp;</span><span style="color:#4ec9b0">std</span><span style="color:#d4d4d4">::</span><span style="color:#4ec9b0">fs</span><span style="color:#d4d4d4">::</span><span style="color:#dcdcaa">read_to_string</span><span style="color:#d4d4d4">(</span><span style="color:#4ec9b0">Path</span><span style="color:#d4d4d4">::</span><span style="color:#dcdcaa">new</span><span style="color:#d4d4d4">(&amp;</span><span style="color:#9cdcfe">configuration_path</span><span style="color:#d4d4d4">))</span></div><div class="t" style="left:474.00px;top:1071.13px;font-size:18.7px;line-height:18.7px;color:#d4d4d4;font-family:'Liberation Mono', monospace;letter-spacing:-0.14599999999999902px;-webkit-text-stroke:0.3px;"><span style="color:#d4d4d4">            .</span><span style="color:#dcdcaa">unwrap</span><span style="color:#d4d4d4">(), </span><span style="color:#ce9178">'.'</span><span style="color:#d4d4d4">, </span><span style="color:#ce9178">'*'</span><span style="color:#d4d4d4">).</span><span style="color:#dcdcaa">unwrap</span><span style="color:#d4d4d4">();</span></div><div class="t" style="left:474.00px;top:1125.85px;font-size:18.7px;line-height:18.7px;color:#d4d4d4;font-family:'Liberation Mono', monospace;letter-spacing:-0.14599999999999902px;-webkit-text-stroke:0.3px;"><span style="color:#d4d4d4">        </span><span style="color:#569cd6">let</span><span style="color:#d4d4d4"> </span><span style="color:#569cd6">mut</span><span style="color:#d4d4d4"> </span><span style="color:#9cdcfe">previous_update</span><span style="color:#d4d4d4"> = UNIX_EPOCH;</span></div><div class="t" style="left:474.00px;top:1180.57px;font-size:18.7px;line-height:18.7px;color:#d4d4d4;font-family:'Liberation Mono', monospace;letter-spacing:-0.14599999999999902px;-webkit-text-stroke:0.3px;"><span style="color:#d4d4d4">        </span><span style="color:#c586c0">while</span><span style="color:#d4d4d4"> </span><span style="color:#569cd6">let</span><span style="color:#d4d4d4"> </span><span style="color:#4ec9b0">Some</span><span style="color:#d4d4d4">(</span><span style="color:#9cdcfe">e</span><span style="color:#d4d4d4">) = </span><span style="color:#9cdcfe">window</span><span style="color:#d4d4d4">.</span><span style="color:#dcdcaa">next</span><span style="color:#d4d4d4">() {</span></div><div class="t" style="left:474.00px;top:1207.93px;font-size:18.7px;line-height:18.7px;color:#d4d4d4;font-family:'Liberation Mono', monospace;letter-spacing:-0.14599999999999902px;-webkit-text-stroke:0.3px;"><span style="color:#d4d4d4">            </span><span style="color:#c586c0">if</span><span style="color:#d4d4d4"> </span><span style="color:#9cdcfe">previous_update</span><span style="color:#d4d4d4">.</span><span style="color:#dcdcaa">elapsed</span><span style="color:#d4d4d4">().</span><span style="color:#dcdcaa">map</span><span style="color:#d4d4d4">(|</span><span style="color:#9cdcfe">d</span><span style="color:#d4d4d4">| </span><span style="color:#9cdcfe">d</span><span style="color:#d4d4d4">.</span><span style="color:#dcdcaa">as_millis</span><span style="color:#d4d4d4">()).</span><span style="color:#dcdcaa">unwrap_or</span><span style="color:#d4d4d4">(</span><span style="color:#b5cea8">0</span><span style="color:#d4d4d4">) &gt; MILLIS_PER_FRAME {</span></div><div class="t" style="left:474.00px;top:1235.29px;font-size:18.7px;line-height:18.7px;color:#d4d4d4;font-family:'Liberation Mono', monospace;letter-spacing:-0.14599999999999902px;-webkit-text-stroke:0.3px;"><span style="color:#d4d4d4">                </span><span style="color:#6a9955">// NOTE: Uncomment for timing info</span></div><div class="t" style="left:474.00px;top:1262.65px;font-size:18.7px;line-height:18.7px;color:#d4d4d4;font-family:'Liberation Mono', monospace;letter-spacing:-0.14599999999999902px;-webkit-text-stroke:0.3px;"><span style="color:#d4d4d4">                </span><span style="color:#6a9955">// let step_start = SystemTime::now();</span></div><div class="t" style="left:474.00px;top:1290.01px;font-size:18.7px;line-height:18.7px;color:#d4d4d4;font-family:'Liberation Mono', monospace;letter-spacing:-0.14599999999999902px;-webkit-text-stroke:0.3px;"><span style="color:#d4d4d4">                </span><span style="color:#9cdcfe">world</span><span style="color:#d4d4d4">.</span><span style="color:#dcdcaa">step</span><span style="color:#d4d4d4">();</span></div><div class="t" style="left:474.00px;top:1317.37px;font-size:18.7px;line-height:18.7px;color:#d4d4d4;font-family:'Liberation Mono', monospace;letter-spacing:-0.14599999999999902px;-webkit-text-stroke:0.3px;"><span style="color:#d4d4d4">                </span><span style="color:#6a9955">// println!("Step took: {}ms", step_start.elapsed().map(|d| d.as_micros()).unwrap_or(0) as f32 / 1000.0);</span></div><div class="t" style="left:474.00px;top:1344.73px;font-size:18.7px;line-height:18.7px;color:#d4d4d4;font-family:'Liberation Mono', monospace;letter-spacing:-0.14599999999999902px;-webkit-text-stroke:0.3px;"><span style="color:#d4d4d4">                </span><span style="color:#9cdcfe">previous_update</span><span style="color:#d4d4d4"> = </span><span style="color:#4ec9b0">SystemTime</span><span style="color:#d4d4d4">::</span><span style="color:#dcdcaa">now</span><span style="color:#d4d4d4">();</span></div><svg class="s" style="left:528px;top:541.3px;clip-path:inset(0 0 0 0);" width="100" height="6" viewBox="0 0 100 6"><path d="M0 4.5 L2.25 0.8 L6.75 4.5 L11.25 0.8 L15.75 4.5 L20.25 0.8 L24.75 4.5 L29.25 0.8 L33.75 4.5 L38.25 0.8 L42.75 4.5 L47.25 0.8 L51.75 4.5 L56.25 0.8 L60.75 4.5 L65.25 0.8 L69.75 4.5 L74.25 0.8 L78.75 4.5 L83.25 0.8 L87.75 4.5 L92.25 0.8 L96.75 4.5 L101.25 0.8" fill="none" stroke="#cca700" stroke-width="1.4" stroke-linejoin="round"/></svg></div><div class="r" style="left:376px;top:125.3px;width:2164px;height:6.5px;background:linear-gradient(#0000006e, #00000000);"></div><div class="r" style="left:528px;top:353px;width:655px;height:168px;background:#252526;box-sizing:border-box;border:1.5px solid #454545;"></div><div class="r" style="left:529.5px;top:487px;width:652px;height:32.5px;background:#2c2c2d;"></div><div class="r" style="left:529.5px;top:446.5px;width:652px;height:1.5px;background:#3a3a3b;"></div><div class="r" style="left:529.5px;top:486px;width:652px;height:1.5px;background:#3a3a3b;"></div><div class="t" style="left:541.50px;top:366.27px;font-size:18.7px;line-height:18.7px;color:#d4d4d4;font-family:'Liberation Mono', monospace;letter-spacing:-0.14599999999999902px;-webkit-text-stroke:0.3px;">enum is never used: `Lifecycle`</div><div class="t" style="left:541.50px;top:419.47px;font-size:18.7px;line-height:18.7px;color:#d4d4d4;font-family:'Liberation Mono', monospace;letter-spacing:-0.14599999999999902px;-webkit-text-stroke:0.3px;">note: `#[warn(dead_code)]` on by default <span style="color:#9d9d9d">rustc(dead_code)</span></div><div class="t" style="left:541.50px;top:460.07px;font-size:18.7px;line-height:18.7px;color:#d4d4d4;font-family:'Liberation Mono', monospace;letter-spacing:-0.14599999999999902px;-webkit-text-stroke:0.3px;"><span style="color:#569cd6">enum</span> <span style="color:#4ec9b0">Lifecycle</span></div><div class="t" style="left:541.40px;top:495.76px;font-size:18px;line-height:18px;color:#3794ff;font-family:'Liberation Sans', sans-serif;transform:scaleX(0.9420);transform-origin:0 0;">View Problem</div><div class="t" style="left:670.30px;top:495.76px;font-size:18px;line-height:18px;color:#cccccc;font-family:'Liberation Sans', sans-serif;transform:scaleX(0.9421);transform-origin:0 0;">No quick fixes available</div><div class="r" style="left:2540px;top:125px;width:1.5px;height:1243px;background:#4a4a4a;"></div><div class="r" style="left:2541.5px;top:154px;width:18.5px;height:501px;background:#424242;"></div><div class="r" style="left:2541.5px;top:311px;width:18.5px;height:2px;background:#a0a0a0;"></div><div class="r" style="left:2554px;top:312px;width:6px;height:11px;background:#cca700;"></div><div class="r" style="left:2429px;top:159.3px;width:111px;height:2px;background:#1f4466;"></div><div style="position:absolute;left:0;top:0;width:2560px;height:1400px;clip-path:inset(125px 20px 0 2429px)"><div style="position:absolute;left:2429px;top:125.0px;width:1100px;height:1400px;transform:scale(0.1);transform-origin:0 0;font-family:'Liberation Mono', monospace;font-size:16.67px;line-height:20px;font-weight:bold;-webkit-text-stroke:1.2px;opacity:0.9"><div style="position:absolute;left:0;top:0px;height:20px;white-space:pre"><span style="color:#569cd6">use</span><span style="color:#d4d4d4"> </span><span style="color:#4ec9b0">std</span><span style="color:#d4d4d4">::</span><span style="color:#4ec9b0">time</span><span style="color:#d4d4d4">::{</span><span style="color:#4ec9b0">SystemTime</span><span style="color:#d4d4d4">, UNIX_EPOCH};</span></div><div style="position:absolute;left:0;top:20px;height:20px;white-space:pre"><span style="color:#569cd6">use</span><span style="color:#d4d4d4"> </span><span style="color:#4ec9b0">std</span><span style="color:#d4d4d4">::</span><span style="color:#4ec9b0">path</span><span style="color:#d4d4d4">::</span><span style="color:#4ec9b0">Path</span><span style="color:#d4d4d4">;</span></div><div style="position:absolute;left:0;top:40px;height:20px;white-space:pre"></div><div style="position:absolute;left:0;top:60px;height:20px;white-space:pre"><span style="color:#569cd6">extern</span><span style="color:#d4d4d4"> </span><span style="color:#569cd6">crate</span><span style="color:#d4d4d4"> piston_window;</span></div><div style="position:absolute;left:0;top:80px;height:20px;white-space:pre"><span style="color:#569cd6">use</span><span style="color:#d4d4d4"> </span><span style="color:#4ec9b0">piston_window</span><span style="color:#d4d4d4">::*;</span></div><div style="position:absolute;left:0;top:100px;height:20px;white-space:pre"></div><div style="position:absolute;left:0;top:120px;height:20px;white-space:pre"><span style="color:#569cd6">mod</span><span style="color:#d4d4d4"> life;</span></div><div style="position:absolute;left:0;top:140px;height:20px;white-space:pre"><span style="color:#569cd6">use</span><span style="color:#d4d4d4"> </span><span style="color:#4ec9b0">life</span><span style="color:#d4d4d4">::{</span><span style="color:#4ec9b0">World</span><span style="color:#d4d4d4">};</span></div><div style="position:absolute;left:0;top:160px;height:20px;white-space:pre"></div><div style="position:absolute;left:0;top:180px;height:20px;white-space:pre"><span style="color:#569cd6">const</span><span style="color:#d4d4d4"> BLACK: [</span><span style="color:#4ec9b0">f32</span><span style="color:#d4d4d4">;</span><span style="color:#b5cea8">4</span><span style="color:#d4d4d4">] = [</span><span style="color:#b5cea8">0.0</span><span style="color:#d4d4d4">, </span><span style="color:#b5cea8">0.0</span><span style="color:#d4d4d4">, </span><span style="color:#b5cea8">0.0</span><span style="color:#d4d4d4">, </span><span style="color:#b5cea8">1.0</span><span style="color:#d4d4d4">];</span></div><div style="position:absolute;left:0;top:200px;height:20px;white-space:pre"><span style="color:#569cd6">const</span><span style="color:#d4d4d4"> WHITE: [</span><span style="color:#4ec9b0">f32</span><span style="color:#d4d4d4">;</span><span style="color:#b5cea8">4</span><span style="color:#d4d4d4">] = [</span><span style="color:#b5cea8">1.0</span><span style="color:#d4d4d4">; </span><span style="color:#b5cea8">4</span><span style="color:#d4d4d4">];</span></div><div style="position:absolute;left:0;top:220px;height:20px;white-space:pre"><span style="color:#569cd6">const</span><span style="color:#d4d4d4"> RED: [</span><span style="color:#4ec9b0">f32</span><span style="color:#d4d4d4">;</span><span style="color:#b5cea8">4</span><span style="color:#d4d4d4">] = [</span><span style="color:#b5cea8">1.0, 0.0, 0.0, 1.0</span><span style="color:#d4d4d4">];</span></div><div style="position:absolute;left:0;top:240px;height:20px;white-space:pre"><span style="color:#569cd6">const</span><span style="color:#d4d4d4"> WINDOW_SIZE: </span><span style="color:#4ec9b0">f64</span><span style="color:#d4d4d4"> = </span><span style="color:#b5cea8">1.0</span><span style="color:#d4d4d4">;</span></div><div style="position:absolute;left:0;top:260px;height:20px;white-space:pre"><span style="color:#569cd6">const</span><span style="color:#d4d4d4"> BLOCK_SIZE: </span><span style="color:#4ec9b0">f64</span><span style="color:#d4d4d4"> = </span><span style="color:#b5cea8">10.0</span><span style="color:#d4d4d4">;</span></div><div style="position:absolute;left:0;top:280px;height:20px;white-space:pre"><span style="color:#569cd6">const</span><span style="color:#d4d4d4"> INIT_WINDOW_SIZE: </span><span style="color:#4ec9b0">f64</span><span style="color:#d4d4d4"> = WINDOW_SIZE * </span><span style="color:#b5cea8">2.0</span><span style="color:#d4d4d4"> * </span><span style="color:#b5cea8">10.0</span><span style="color:#d4d4d4">;</span></div><div style="position:absolute;left:0;top:300px;height:20px;white-space:pre"><span style="color:#569cd6">const</span><span style="color:#d4d4d4"> MILLIS_PER_FRAME: </span><span style="color:#4ec9b0">u128</span><span style="color:#d4d4d4"> = </span><span style="color:#b5cea8">16</span><span style="color:#d4d4d4">;</span></div><div style="position:absolute;left:0;top:320px;height:20px;white-space:pre"></div><div style="position:absolute;left:0;top:340px;height:20px;white-space:pre"><span style="color:#569cd6">enum</span><span style="color:#d4d4d4"> </span><span style="color:#4ec9b0">Lifecycle</span><span style="color:#d4d4d4"> {</span></div><div style="position:absolute;left:0;top:360px;height:20px;white-space:pre"><span style="color:#d4d4d4">    </span><span style="color:#4ec9b0">Thing</span><span style="color:#d4d4d4">,</span></div><div style="position:absolute;left:0;top:380px;height:20px;white-space:pre"><span style="color:#d4d4d4">    </span><span style="color:#4ec9b0">OtherThing</span></div><div style="position:absolute;left:0;top:400px;height:20px;white-space:pre"><span style="color:#d4d4d4">}</span></div><div style="position:absolute;left:0;top:420px;height:20px;white-space:pre"></div><div style="position:absolute;left:0;top:440px;height:20px;white-space:pre"><span style="color:#569cd6">fn</span><span style="color:#d4d4d4"> </span><span style="color:#dcdcaa">main</span><span style="color:#d4d4d4">() {</span></div><div style="position:absolute;left:0;top:460px;height:20px;white-space:pre"><span style="color:#d4d4d4">    </span><span style="color:#569cd6">let</span><span style="color:#d4d4d4"> </span><span style="color:#9cdcfe">args</span><span style="color:#d4d4d4">: </span><span style="color:#4ec9b0">Vec</span><span style="color:#d4d4d4">&lt;</span><span style="color:#4ec9b0">String</span><span style="color:#d4d4d4">&gt; = </span><span style="color:#4ec9b0">std</span><span style="color:#d4d4d4">::</span><span style="color:#4ec9b0">env</span><span style="color:#d4d4d4">::</span><span style="color:#dcdcaa">args</span><span style="color:#d4d4d4">().</span><span style="color:#dcdcaa">collect</span><span style="color:#d4d4d4">();</span></div><div style="position:absolute;left:0;top:480px;height:20px;white-space:pre"></div><div style="position:absolute;left:0;top:500px;height:20px;white-space:pre"><span style="color:#d4d4d4">    </span><span style="color:#c586c0">if</span><span style="color:#d4d4d4"> </span><span style="color:#9cdcfe">args</span><span style="color:#d4d4d4">.</span><span style="color:#dcdcaa">len</span><span style="color:#d4d4d4">() &lt; </span><span style="color:#b5cea8">2</span><span style="color:#d4d4d4"> {</span></div><div style="position:absolute;left:0;top:520px;height:20px;white-space:pre"><span style="color:#d4d4d4">        </span><span style="color:#dcdcaa">println!</span><span style="color:#d4d4d4">(</span><span style="color:#ce9178">"Usage: life CONFIGURATION"</span><span style="color:#d4d4d4">)</span></div><div style="position:absolute;left:0;top:540px;height:20px;white-space:pre"><span style="color:#d4d4d4">    } </span><span style="color:#c586c0">else</span><span style="color:#d4d4d4"> {</span></div><div style="position:absolute;left:0;top:560px;height:20px;white-space:pre"><span style="color:#d4d4d4">        </span><span style="color:#569cd6">let</span><span style="color:#d4d4d4"> </span><span style="color:#9cdcfe">opengl</span><span style="color:#d4d4d4"> = </span><span style="color:#4ec9b0">OpenGL</span><span style="color:#d4d4d4">::V3_2;</span></div><div style="position:absolute;left:0;top:580px;height:20px;white-space:pre"><span style="color:#d4d4d4">        </span><span style="color:#569cd6">let</span><span style="color:#d4d4d4"> </span><span style="color:#569cd6">mut</span><span style="color:#d4d4d4"> </span><span style="color:#9cdcfe">window</span><span style="color:#d4d4d4">: </span><span style="color:#4ec9b0">PistonWindow</span><span style="color:#d4d4d4"> = </span><span style="color:#4ec9b0">WindowSettings</span><span style="color:#d4d4d4">::</span><span style="color:#dcdcaa">new</span><span style="color:#d4d4d4">(</span><span style="color:#ce9178">"Life"</span><span style="color:#d4d4d4">, [WINDOW_SIZE; </span><span style="color:#b5cea8">2</span><span style="color:#d4d4d4">])</span></div><div style="position:absolute;left:0;top:600px;height:20px;white-space:pre"><span style="color:#d4d4d4">            .</span><span style="color:#dcdcaa">exit_on_esc</span><span style="color:#d4d4d4">(</span><span style="color:#569cd6">true</span><span style="color:#d4d4d4">)</span></div><div style="position:absolute;left:0;top:620px;height:20px;white-space:pre"><span style="color:#d4d4d4">            .</span><span style="color:#dcdcaa">graphics_api</span><span style="color:#d4d4d4">(</span><span style="color:#9cdcfe">opengl</span><span style="color:#d4d4d4">)</span></div><div style="position:absolute;left:0;top:640px;height:20px;white-space:pre"><span style="color:#d4d4d4">            .</span><span style="color:#dcdcaa">build</span><span style="color:#d4d4d4">()</span></div><div style="position:absolute;left:0;top:660px;height:20px;white-space:pre"><span style="color:#d4d4d4">            .</span><span style="color:#dcdcaa">unwrap</span><span style="color:#d4d4d4">();</span></div><div style="position:absolute;left:0;top:680px;height:20px;white-space:pre"></div><div style="position:absolute;left:0;top:700px;height:20px;white-space:pre"><span style="color:#d4d4d4">        </span><span style="color:#569cd6">let</span><span style="color:#d4d4d4"> </span><span style="color:#9cdcfe">configuration_path</span><span style="color:#d4d4d4"> = </span><span style="color:#4ec9b0">String</span><span style="color:#d4d4d4">::</span><span style="color:#dcdcaa">from</span><span style="color:#d4d4d4">(</span><span style="color:#ce9178">"./src/configurations/"</span><span style="color:#d4d4d4">) + &amp;</span><span style="color:#9cdcfe">args</span><span style="color:#d4d4d4">[</span><span style="color:#b5cea8">1</span><span style="color:#d4d4d4">] + </span><span style="color:#ce9178">".txt"</span><span style="color:#d4d4d4">;</span></div><div style="position:absolute;left:0;top:720px;height:20px;white-space:pre"><span style="color:#d4d4d4">        </span><span style="color:#569cd6">let</span><span style="color:#d4d4d4"> </span><span style="color:#569cd6">mut</span><span style="color:#d4d4d4"> </span><span style="color:#9cdcfe">world</span><span style="color:#d4d4d4"> = </span><span style="color:#4ec9b0">World</span><span style="color:#d4d4d4">::</span><span style="color:#dcdcaa">from_configuration</span><span style="color:#d4d4d4">(&amp;</span><span style="color:#4ec9b0">std</span><span style="color:#d4d4d4">::</span><span style="color:#4ec9b0">fs</span><span style="color:#d4d4d4">::</span><span style="color:#dcdcaa">read_to_string</span><span style="color:#d4d4d4">(</span><span style="color:#4ec9b0">Path</span><span style="color:#d4d4d4">::</span><span style="color:#dcdcaa">new</span><span style="color:#d4d4d4">(&amp;</span><span style="color:#9cdcfe">configuration_path</span><span style="color:#d4d4d4">))</span></div><div style="position:absolute;left:0;top:740px;height:20px;white-space:pre"><span style="color:#d4d4d4">            .</span><span style="color:#dcdcaa">unwrap</span><span style="color:#d4d4d4">(), </span><span style="color:#ce9178">'.'</span><span style="color:#d4d4d4">, </span><span style="color:#ce9178">'*'</span><span style="color:#d4d4d4">).</span><span style="color:#dcdcaa">unwrap</span><span style="color:#d4d4d4">();</span></div><div style="position:absolute;left:0;top:760px;height:20px;white-space:pre"></div><div style="position:absolute;left:0;top:780px;height:20px;white-space:pre"><span style="color:#d4d4d4">        </span><span style="color:#569cd6">let</span><span style="color:#d4d4d4"> </span><span style="color:#569cd6">mut</span><span style="color:#d4d4d4"> </span><span style="color:#9cdcfe">previous_update</span><span style="color:#d4d4d4"> = UNIX_EPOCH;</span></div><div style="position:absolute;left:0;top:800px;height:20px;white-space:pre"></div><div style="position:absolute;left:0;top:820px;height:20px;white-space:pre"><span style="color:#d4d4d4">        </span><span style="color:#c586c0">while</span><span style="color:#d4d4d4"> </span><span style="color:#569cd6">let</span><span style="color:#d4d4d4"> </span><span style="color:#4ec9b0">Some</span><span style="color:#d4d4d4">(</span><span style="color:#9cdcfe">e</span><span style="color:#d4d4d4">) = </span><span style="color:#9cdcfe">window</span><span style="color:#d4d4d4">.</span><span style="color:#dcdcaa">next</span><span style="color:#d4d4d4">() {</span></div><div style="position:absolute;left:0;top:840px;height:20px;white-space:pre"><span style="color:#d4d4d4">            </span><span style="color:#c586c0">if</span><span style="color:#d4d4d4"> </span><span style="color:#9cdcfe">previous_update</span><span style="color:#d4d4d4">.</span><span style="color:#dcdcaa">elapsed</span><span style="color:#d4d4d4">().</span><span style="color:#dcdcaa">map</span><span style="color:#d4d4d4">(|</span><span style="color:#9cdcfe">d</span><span style="color:#d4d4d4">| </span><span style="color:#9cdcfe">d</span><span style="color:#d4d4d4">.</span><span style="color:#dcdcaa">as_millis</span><span style="color:#d4d4d4">()).</span><span style="color:#dcdcaa">unwrap_or</span><span style="color:#d4d4d4">(</span><span style="color:#b5cea8">0</span><span style="color:#d4d4d4">) &gt; MILLIS_PER_FRAME {</span></div><div style="position:absolute;left:0;top:860px;height:20px;white-space:pre"><span style="color:#d4d4d4">                </span><span style="color:#6a9955">// NOTE: Uncomment for timing info</span></div><div style="position:absolute;left:0;top:880px;height:20px;white-space:pre"><span style="color:#d4d4d4">                </span><span style="color:#6a9955">// let step_start = SystemTime::now();</span></div><div style="position:absolute;left:0;top:900px;height:20px;white-space:pre"><span style="color:#d4d4d4">                </span><span style="color:#9cdcfe">world</span><span style="color:#d4d4d4">.</span><span style="color:#dcdcaa">step</span><span style="color:#d4d4d4">();</span></div><div style="position:absolute;left:0;top:920px;height:20px;white-space:pre"><span style="color:#d4d4d4">                </span><span style="color:#6a9955">// println!("Step took: {}ms", step_start.elapsed().map(|d| d.as_micros()).unwrap_or(0) as f32 / 1000.0);</span></div><div style="position:absolute;left:0;top:940px;height:20px;white-space:pre"><span style="color:#d4d4d4">                </span><span style="color:#9cdcfe">previous_update</span><span style="color:#d4d4d4"> = </span><span style="color:#4ec9b0">SystemTime</span><span style="color:#d4d4d4">::</span><span style="color:#dcdcaa">now</span><span style="color:#d4d4d4">();</span></div><div style="position:absolute;left:0;top:960px;height:20px;white-space:pre"><span style="color:#d4d4d4">            }</span></div><div style="position:absolute;left:0;top:980px;height:20px;white-space:pre"></div><div style="position:absolute;left:0;top:1000px;height:20px;white-space:pre"><span style="color:#d4d4d4">            </span><span style="color:#9cdcfe">window</span><span style="color:#d4d4d4">.</span><span style="color:#dcdcaa">draw_2d</span><span style="color:#d4d4d4">(&amp;</span><span style="color:#9cdcfe">e</span><span style="color:#d4d4d4">, |</span><span style="color:#9cdcfe">context</span><span style="color:#d4d4d4">, </span><span style="color:#9cdcfe">graphics</span><span style="color:#d4d4d4">, _| {</span></div><div style="position:absolute;left:0;top:1020px;height:20px;white-space:pre"><span style="color:#d4d4d4">                </span><span style="color:#dcdcaa">clear</span><span style="color:#d4d4d4">(BLACK, </span><span style="color:#9cdcfe">graphics</span><span style="color:#d4d4d4">);</span></div><div style="position:absolute;left:0;top:1040px;height:20px;white-space:pre"></div><div style="position:absolute;left:0;top:1060px;height:20px;white-space:pre"><span style="color:#d4d4d4">                </span><span style="color:#6a9955">// Transform so that we can use grid coords as the drawing coords</span></div><div style="position:absolute;left:0;top:1080px;height:20px;white-space:pre"><span style="color:#d4d4d4">                </span><span style="color:#569cd6">let</span><span style="color:#d4d4d4"> </span><span style="color:#9cdcfe">transform</span><span style="color:#d4d4d4"> = </span><span style="color:#9cdcfe">context</span><span style="color:#d4d4d4">.</span><span style="color:#9cdcfe">transform</span><span style="color:#d4d4d4">.</span><span style="color:#dcdcaa">scale</span><span style="color:#d4d4d4">(WINDOW_SIZE, WINDOW_SIZE);</span></div><div style="position:absolute;left:0;top:1100px;height:20px;white-space:pre"></div><div style="position:absolute;left:0;top:1120px;height:20px;white-space:pre"><span style="color:#d4d4d4">                </span><span style="color:#c586c0">for</span><span style="color:#d4d4d4"> </span><span style="color:#9cdcfe">(x, y)</span><span style="color:#c586c0"> in </span><span style="color:#9cdcfe">world</span><span style="color:#d4d4d4">.</span><span style="color:#dcdcaa">alive_cells</span><span style="color:#d4d4d4">().</span><span style="color:#dcdcaa">iter</span><span style="color:#d4d4d4">() {</span></div><div style="position:absolute;left:0;top:1140px;height:20px;white-space:pre"><span style="color:#d4d4d4">                    </span><span style="color:#c586c0">if</span><span style="color:#d4d4d4"> </span><span style="color:#9cdcfe">world</span><span style="color:#d4d4d4">.</span><span style="color:#dcdcaa">get</span><span style="color:#d4d4d4">(x, y) {</span></div><div style="position:absolute;left:0;top:1160px;height:20px;white-space:pre"><span style="color:#d4d4d4">                    </span><span style="color:#dcdcaa">    rectangle</span><span style="color:#d4d4d4">(WHITE, [</span><span style="color:#9cdcfe">x as</span><span style="color:#4ec9b0"> f64 </span><span style="color:#d4d4d4">* </span><span style="color:#b5cea8">10</span><span style="color:#d4d4d4">, WINDOW_SIZE, </span><span style="color:#9cdcfe">y as</span><span style="color:#4ec9b0"> f64 </span><span style="color:#d4d4d4">* </span><span style="color:#b5cea8">10</span><span style="color:#d4d4d4">, WINDOW_SIZE, WINDOW_SIZE]</span></div><div style="position:absolute;left:0;top:1180px;height:20px;white-space:pre"><span style="color:#d4d4d4">                    } </span><span style="color:#c586c0">else</span><span style="color:#d4d4d4"> {</span></div><div style="position:absolute;left:0;top:1200px;height:20px;white-space:pre"><span style="color:#d4d4d4">                        </span><span style="color:#6a9955">// Draw rectangles so that the grid lines will show up in the dead area</span></div><div style="position:absolute;left:0;top:1220px;height:20px;white-space:pre"><span style="color:#d4d4d4">                        </span><span style="color:#dcdcaa">rectangle</span><span style="color:#d4d4d4">(RED, [</span><span style="color:#9cdcfe">x as</span><span style="color:#4ec9b0"> f64 </span><span style="color:#d4d4d4">* </span><span style="color:#b5cea8">10</span><span style="color:#d4d4d4">, WINDOW_SIZE, </span><span style="color:#9cdcfe">y as</span><span style="color:#4ec9b0"> f64 </span><span style="color:#d4d4d4">* </span><span style="color:#b5cea8">10</span><span style="color:#d4d4d4">, WINDOW_SIZE, WINDOW_SIZE]</span></div><div style="position:absolute;left:0;top:1240px;height:20px;white-space:pre"><span style="color:#d4d4d4">                    }</span></div><div style="position:absolute;left:0;top:1260px;height:20px;white-space:pre"><span style="color:#d4d4d4">                }</span></div><div style="position:absolute;left:0;top:1280px;height:20px;white-space:pre"><span style="color:#d4d4d4">            });</span></div><div style="position:absolute;left:0;top:1300px;height:20px;white-space:pre"><span style="color:#d4d4d4">        }</span></div><div style="position:absolute;left:0;top:1320px;height:20px;white-space:pre"><span style="color:#d4d4d4">    }</span></div><div style="position:absolute;left:0;top:1340px;height:20px;white-space:pre"><span style="color:#d4d4d4">}</span></div></div></div><div class="r" style="left:2434px;top:159px;width:9px;height:2.4px;background:#cca700;"></div><svg class="s" style="left:22px;top:1376px;" width="18" height="18" viewBox="0 0 18 18"><circle cx="9" cy="9" r="7.5" fill="none" stroke="#fff" stroke-width="1.5"/><path d="M5.8 5.8 L12.2 12.2 M12.2 5.8 L5.8 12.2" stroke="#fff" stroke-width="1.5"/></svg><div class="t" style="left:46.50px;top:1376.71px;font-size:17px;line-height:17px;color:#ffffff;font-family:'Liberation Sans', sans-serif;transform:scaleX(0.8464);transform-origin:0 0;">0</div><svg class="s" style="left:60.5px;top:1375px;" width="20" height="18" viewBox="0 0 20 18"><path d="M10 1.5 L18.5 16.5 H1.5 Z" fill="none" stroke="#fff" stroke-width="1.5" stroke-linejoin="round"/><path d="M10 6.5 V11.5 M10 13 V14.5" stroke="#fff" stroke-width="1.6"/></svg><div class="t" style="left:86.50px;top:1376.71px;font-size:17px;line-height:17px;color:#ffffff;font-family:'Liberation Sans', sans-serif;">1</div><svg class="s" style="left:110px;top:1370px;" width="30" height="28" viewBox="0 0 30 28"><path d="M14.6 6.8 V12.6 M14.6 6.8 L25.6 14.4 L18.8 19" fill="none" stroke="#fff" stroke-width="1.4" stroke-linejoin="miter"/><path d="M10.4 17.2 a2 2 0 0 1 4 0" fill="none" stroke="#fff" stroke-width="1.4"/><ellipse cx="12.4" cy="20.4" rx="2.5" ry="3.2" fill="none" stroke="#fff" stroke-width="1.4"/><path d="M9.6 17.9 h5.6 M7.6 15.9 l2.2 1.8 M17.2 15.9 l-2.2 1.8 M7.3 19.9 h2.6 M14.9 19.9 h2.6 M7.8 23.7 l2.2 -1.6 M17 23.7 l-2.2 -1.6" fill="none" stroke="#fff" stroke-width="1.3"/></svg><div class="t" style="left:161.00px;top:1376.71px;font-size:17px;line-height:17px;color:#ffffff;font-family:'Liberation Sans', sans-serif;transform:scaleX(0.9970);transform-origin:0 0;">Rust: [life-master]</div><svg class="s" style="left:303px;top:1376px;" width="16" height="18" viewBox="0 0 16 18"><path d="M2.5 1.5 L13.5 9 L2.5 16.5 Z" fill="none" stroke="#fff" stroke-width="1.8" stroke-linejoin="round"/></svg><div class="t" style="left:2106.00px;top:1376.71px;font-size:17px;line-height:17px;color:#ffffff;font-family:'Liberation Sans', sans-serif;transform:scaleX(0.9533);transform-origin:0 0;">Ln 18, Col 1</div><div class="t" style="left:2217.70px;top:1376.71px;font-size:17px;line-height:17px;color:#ffffff;font-family:'Liberation Sans', sans-serif;transform:scaleX(0.9140);transform-origin:0 0;">Spaces: 4</div><div class="t" style="left:2311.20px;top:1376.71px;font-size:17px;line-height:17px;color:#ffffff;font-family:'Liberation Sans', sans-serif;transform:scaleX(0.9281);transform-origin:0 0;">UTF-8</div><div class="t" style="left:2379.60px;top:1376.71px;font-size:17px;line-height:17px;color:#ffffff;font-family:'Liberation Sans', sans-serif;transform:scaleX(0.8015);transform-origin:0 0;">LF</div><div class="t" style="left:2419.40px;top:1376.71px;font-size:17px;line-height:17px;color:#ffffff;font-family:'Liberation Sans', sans-serif;transform:scaleX(0.9127);transform-origin:0 0;">Rust</div><svg class="s" style="left:2474px;top:1374px;" width="22" height="22" viewBox="0 0 22 22"><path d="M8 3 h12 v9 h-3 l-2.5 2" fill="none" stroke="#fff" stroke-width="1.4"/><circle cx="8" cy="9" r="3.8" fill="none" stroke="#fff" stroke-width="1.4"/><path d="M1.5 19.5 C2 14.5 5 13.5 8 13.5 C11 13.5 14 14.5 14.5 19.5" fill="none" stroke="#fff" stroke-width="1.4"/></svg><svg class="s" style="left:2519px;top:1375px;" width="18" height="20" viewBox="0 0 18 20"><path d="M3 14 V8.5 A6 6 0 0 1 15 8.5 V14 L16.5 15.5 H1.5 Z" fill="none" stroke="#fff" stroke-width="1.5" stroke-linejoin="round"/><path d="M7 17.5 A2 2 0 0 0 11 17.5" fill="none" stroke="#fff" stroke-width="1.5"/></svg></body></html>
